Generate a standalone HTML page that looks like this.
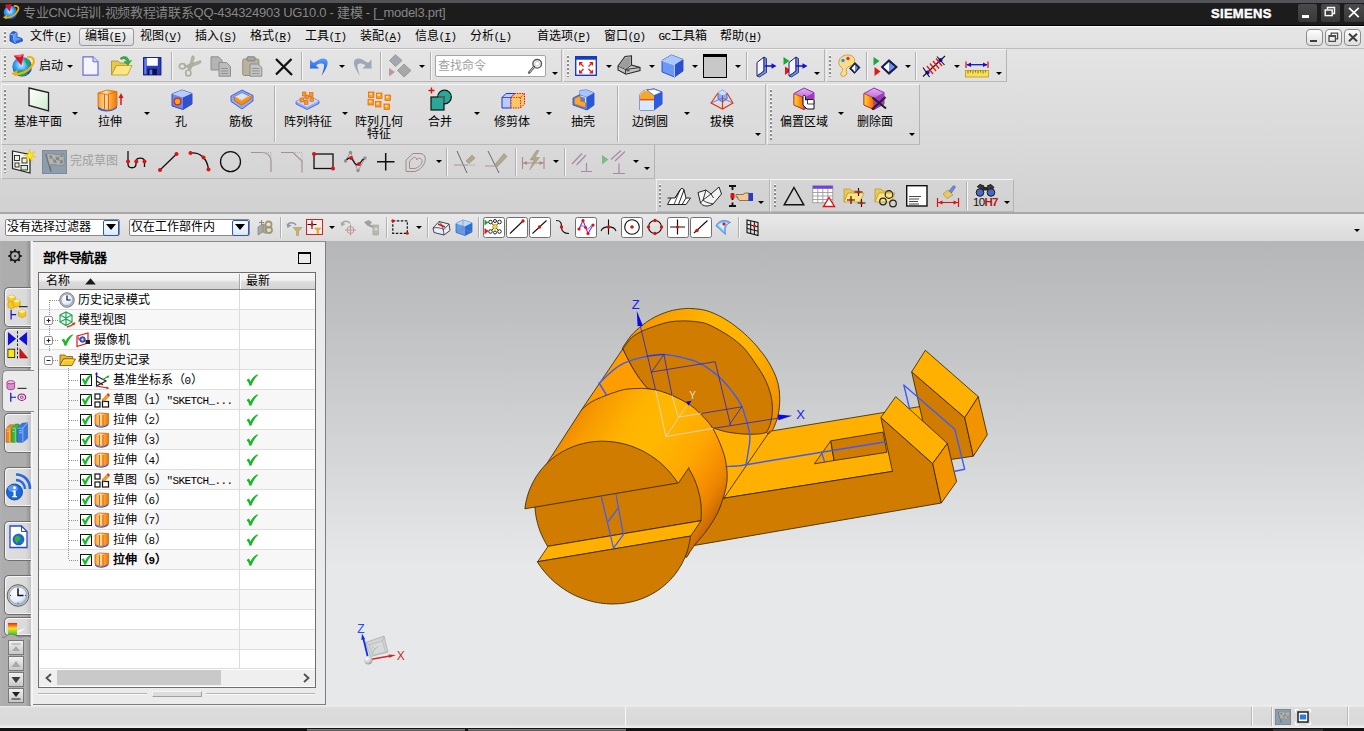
<!DOCTYPE html>
<html lang="zh-CN"><head><meta charset="utf-8"><title>NX</title>
<style>
*{margin:0;padding:0;box-sizing:border-box}
html,body{width:1364px;height:731px;overflow:hidden;background:#dedede}
body{position:relative;font-family:"Liberation Sans",sans-serif;font-size:12px;color:#000}
.a{position:absolute}
.t{position:absolute;white-space:nowrap;font-size:12px;line-height:12px;height:12px}
.t i{font-style:normal;font-family:"Liberation Mono",monospace;font-size:11px;letter-spacing:-0.6px}
svg{position:absolute;overflow:visible}
.tb{position:absolute;border-top:1px solid #f4f4f4;border-left:1px solid #efefef;border-right:1px solid #b4b4b4;border-bottom:1px solid #b8b8b8}
.sep{position:absolute;width:2px;border-left:1px solid #b0b0b0;border-right:1px solid #f6f6f6}
.grip{position:absolute;width:2px;background-image:repeating-linear-gradient(180deg,#fafafa 0,#fafafa 1px,#8c8c8c 1px,#8c8c8c 3px,transparent 3px,transparent 4px)}
.dd{position:absolute;width:0;height:0;border-left:3px solid transparent;border-right:3px solid transparent;border-top:3px solid #000}
</style></head>
<body>
<!-- frame backgrounds -->
<div class="a" style="left:0;top:0;width:1364px;height:3px;background:#535458"></div>
<div class="a" style="left:0;top:3px;width:1364px;height:23px;background:#1c1c1c;border-bottom:1px solid #000"></div>
<div class="a" style="left:0;top:26px;width:1364px;height:22px;background:linear-gradient(#e6e6e6,#e1e1e1);border-top:1px solid #fdfdfd"></div>
<div class="a" style="left:0;top:48px;width:1364px;height:1px;background:#bdbdbd"></div>
<div class="a" style="left:0;top:49px;width:1364px;height:164px;background:linear-gradient(#e4e4e4,#d1d1d1)"></div>
<div class="a" style="left:0;top:212px;width:1364px;height:2px;background:#a8a8a8"></div>
<div class="a" style="left:0;top:214px;width:1364px;height:27px;background:linear-gradient(#e9e9e9,#dadada)"></div>
<!-- viewport -->
<div class="a" style="left:326px;top:241px;width:1038px;height:465px;background:linear-gradient(#b5b6b7 0,#c3c4c5 22%,#d6d7d8 48%,#e7e8e9 70%,#e7e8e9 100%)"></div>
<svg class="a" style="left:0;top:0" width="1364" height="731" viewBox="0 0 1364 731"><defs>
<linearGradient id="gcyl" gradientUnits="userSpaceOnUse" x1="536" y1="470" x2="700" y2="578">
<stop offset="0" stop-color="#ee8800"/><stop offset="0.1" stop-color="#f89c00"/><stop offset="0.28" stop-color="#ffb500"/><stop offset="0.42" stop-color="#ffb800"/><stop offset="0.62" stop-color="#ffa800"/><stop offset="0.74" stop-color="#f89200"/><stop offset="0.82" stop-color="#ea8200"/><stop offset="0.88" stop-color="#cc6e00"/><stop offset="0.93" stop-color="#b46000"/></linearGradient>
<linearGradient id="grim" gradientUnits="userSpaceOnUse" x1="640" y1="320" x2="790" y2="420">
<stop offset="0" stop-color="#f59600"/><stop offset="0.3" stop-color="#ffb400"/><stop offset="0.6" stop-color="#ffb200"/><stop offset="0.8" stop-color="#f89e00"/><stop offset="1" stop-color="#e88400"/></linearGradient>
</defs>
<polygon points="772.0,430.9 921.0,406.4 925.0,420.0 892.5,471.4 723.9,498.2 690.0,500.0 690.0,405.0 765.0,415.0" fill="#ffb000" stroke="#2a2008" stroke-width="0.8" stroke-linejoin="round" />
<polygon points="723.9,498.2 892.5,471.4 880.9,417.5 932.7,463.6 941.3,503.0 690.0,546.2 690.0,520.0" fill="#cf7c00" stroke="#2a2008" stroke-width="0.8" stroke-linejoin="round" />
<polygon points="814.4,463.8 830.8,440.8 834.1,460.5" fill="#f5a000" stroke="#2a2008" stroke-width="0.8" stroke-linejoin="round" />
<polygon points="830.8,440.8 883.0,432.1 886.8,452.3 834.1,460.5" fill="#cf7c00" stroke="#2a2008" stroke-width="0.8" stroke-linejoin="round" />
<polygon points="911.7,371.9 964.7,417.5 973.3,456.2 941.3,460.9 933.9,450.8 924.5,428.6" fill="#cf7c00" stroke="#2a2008" stroke-width="0.8" stroke-linejoin="round" />
<polygon points="964.7,417.5 978.2,396.6 987.3,434.8 973.3,456.2" fill="#f29400" stroke="#2a2008" stroke-width="0.8" stroke-linejoin="round" />
<polygon points="911.7,371.9 925.3,350.3 978.2,396.6 964.7,417.5" fill="#ffb000" stroke="#2a2008" stroke-width="0.8" stroke-linejoin="round" />
<polygon points="880.9,417.5 895.7,396.6 947.4,443.4 932.7,463.6" fill="#ffb000" stroke="#2a2008" stroke-width="0.8" stroke-linejoin="round" />
<polygon points="932.7,463.6 947.4,443.4 956.6,481.6 941.3,503.0" fill="#f29400" stroke="#2a2008" stroke-width="0.8" stroke-linejoin="round" />
<polygon points="622.8,348.9 622.8,348.8 622.6,348.7 622.5,348.6 622.5,348.3 622.7,347.7 623.2,346.8 624.1,345.4 625.4,343.5 626.8,341.4 628.4,339.2 629.9,337.1 631.4,335.3 632.8,333.8 634.1,332.4 635.5,331.1 636.9,329.8 638.2,328.7 639.6,327.5 641.0,326.4 642.3,325.3 643.7,324.2 645.1,323.2 646.4,322.2 647.8,321.3 649.1,320.4 650.4,319.6 651.7,318.8 653.0,318.0 654.5,317.2 656.1,316.4 657.9,315.6 659.9,314.7 662.0,313.8 664.2,313.0 666.3,312.2 668.4,311.5 670.4,310.9 672.5,310.4 674.5,310.0 676.6,309.6 678.6,309.3 680.7,309.0 682.7,308.8 684.7,308.6 686.6,308.5 688.6,308.4 690.7,308.5 693.0,308.6 695.4,308.8 698.0,309.1 700.7,309.4 703.4,309.9 706.3,310.6 709.2,311.5 712.2,312.6 715.3,314.0 718.6,315.5 721.8,317.2 725.1,319.1 728.3,321.1 731.5,323.3 734.8,325.7 738.1,328.3 741.4,330.9 744.5,333.7 747.5,336.4 750.3,339.2 753.1,342.1 755.8,345.0 758.3,348.0 760.6,350.9 762.8,353.7 764.8,356.4 766.6,358.9 768.2,361.5 769.7,364.0 771.1,366.5 772.4,369.0 773.6,371.5 774.8,374.1 775.8,376.6 776.7,379.2 777.5,381.7 778.2,384.3 778.7,386.9 779.1,389.4 779.4,392.0 779.6,394.6 779.7,397.1 779.7,399.7 779.7,402.3 779.5,404.9 779.3,407.6 779.0,410.2 778.6,412.7 778.2,415.0 777.7,417.2 777.0,419.4 776.3,421.4 775.6,423.3 774.9,425.0 774.3,426.5 773.8,427.7 773.3,428.7 772.8,429.5 772.4,430.1 771.9,430.7 771.4,431.3 770.8,431.9 770.2,432.5 769.5,433.0 768.9,433.4 768.4,433.7 768.0,434.0 733.7,397.6 672.1,356.6" fill="url(#grim)" stroke="#2a2008" stroke-width="0.8" stroke-linejoin="round" />
<polygon points="622.8,348.9 623.7,347.6 625.0,345.9 626.4,343.8 628.1,341.6 629.7,339.5 631.4,337.8 633.0,336.4 634.8,335.2 636.5,334.1 638.3,333.1 640.2,332.1 642.1,331.2 644.0,330.3 646.0,329.4 648.0,328.6 650.1,327.8 652.2,327.1 654.4,326.3 656.6,325.5 658.9,324.8 661.3,324.0 663.7,323.3 666.1,322.7 668.4,322.2 670.7,321.8 673.0,321.5 675.3,321.2 677.6,321.1 679.9,321.0 682.3,320.9 684.7,320.9 687.3,321.0 689.8,321.1 692.3,321.3 694.8,321.5 697.1,321.8 699.2,322.1 701.1,322.4 702.9,322.7 704.7,323.2 706.8,323.9 709.2,324.9 712.0,326.2 715.2,327.8 718.5,329.6 721.9,331.6 725.2,333.5 728.3,335.5 731.1,337.4 733.9,339.4 736.5,341.4 739.0,343.5 741.4,345.6 743.7,347.9 745.9,350.3 747.9,352.8 749.8,355.4 751.7,358.0 753.4,360.6 755.2,363.2 756.9,365.8 758.7,368.3 760.3,370.9 761.9,373.5 763.4,376.0 764.7,378.6 765.9,381.2 767.1,383.8 768.1,386.4 769.0,388.9 769.8,391.5 770.5,393.9 771.1,396.3 771.5,398.6 771.9,400.8 772.1,403.0 772.3,405.2 772.4,407.3 772.4,409.3 772.3,411.3 772.2,413.3 772.0,415.2 771.7,417.0 771.4,418.8 771.1,420.6 770.7,422.3 770.2,424.0 769.7,425.6 769.2,427.1 768.6,428.4 768.0,429.5 767.6,430.5 767.0,431.3 766.3,432.1 765.3,432.7 763.8,433.2 761.8,433.6 759.3,433.9 756.5,434.1 753.6,434.2 750.5,434.3 747.5,434.2 744.4,434.1 741.1,433.8 737.7,433.5 734.4,433.1 731.2,432.7 728.3,432.2 725.6,431.7 723.0,431.0 720.6,430.3 718.4,429.6 716.5,429.0 714.9,428.4 713.8,428.1 713.2,427.9 712.8,427.8 712.5,427.6 712.0,427.2 711.1,426.3 709.8,425.0 708.3,423.3 706.6,421.3 704.8,419.2 702.8,417.0 700.8,415.1 698.7,413.1 696.3,411.2 693.9,409.2 691.4,407.3 688.9,405.5 686.5,403.8 684.1,402.2 681.7,400.7 679.3,399.2 676.9,397.9 674.5,396.7 672.1,395.6 669.6,394.6 667.2,393.9 664.7,393.2 662.2,392.6 659.9,392.0 657.7,391.5 655.7,390.9 653.7,390.4 651.9,390.0 650.2,389.5 648.6,388.9 647.3,388.3 646.2,387.5 645.4,386.7 644.7,385.7 644.1,384.8 643.5,383.9 642.9,383.0 642.3,382.2 641.6,381.4 641.0,380.6 640.5,379.9 639.9,379.1 639.3,378.3 638.7,377.5 638.1,376.7 637.6,375.8 637.0,375.0 636.4,374.1 635.8,373.2 635.2,372.2 634.5,371.2 633.9,370.2 633.2,369.1 632.6,368.0 632.0,367.0 631.4,366.0 630.9,364.9 630.3,363.9 629.8,362.9 629.2,361.8 628.7,360.8 628.2,359.7 627.6,358.7 627.1,357.6 626.5,356.6 626.0,355.5 625.5,354.5 625.0,353.5 624.5,352.4 624.0,351.3 623.5,350.3 623.1,349.5 622.8,348.9" fill="#cf7c00" stroke="#2a2008" stroke-width="0.8" stroke-linejoin="round" />
<polygon points="581.6,409.7 622.8,348.9 625.5,354.5 628.7,360.8 632.0,367.0 635.8,373.2 639.3,378.3 642.9,383.0 647.3,388.3 660.0,392.0 655.7,418.1 590.0,428.4" fill="#ff9d00" stroke="#2a2008" stroke-width="0.8" stroke-linejoin="round" />
<polygon points="543.6,468.6 581.6,409.7 582.7,408.7 584.2,407.4 586.0,405.8 588.1,404.1 590.7,402.4 593.6,400.7 597.2,399.0 601.6,397.2 606.3,395.3 611.0,393.5 615.6,392.0 619.5,390.7 622.8,389.9 625.7,389.3 628.3,389.0 630.8,388.8 633.3,388.6 635.9,388.5 638.6,388.5 641.4,388.4 644.1,388.5 646.9,388.7 649.6,389.0 652.3,389.4 655.0,389.9 657.7,390.4 660.4,391.1 663.1,392.0 665.9,392.9 668.8,394.0 671.9,395.3 675.2,396.8 678.6,398.5 682.0,400.2 685.1,401.9 687.9,403.6 690.3,405.1 692.3,406.6 694.2,408.0 695.9,409.5 697.7,411.2 699.7,413.1 701.8,415.3 704.1,417.5 706.3,420.0 708.6,422.6 710.8,425.4 712.8,428.4 714.7,431.8 716.5,435.5 718.3,439.3 719.9,443.2 721.4,446.9 722.6,450.3 723.6,453.2 724.4,455.9 725.1,458.3 725.6,460.7 726.0,463.1 726.3,465.6 726.7,468.1 726.9,470.7 727.1,473.2 727.2,475.8 727.1,478.3 727.0,480.9 726.7,483.4 726.3,485.9 725.8,488.4 725.2,490.9 724.5,493.5 723.7,496.2 722.9,499.0 721.9,501.8 720.9,504.8 719.8,507.8 718.5,510.7 717.2,513.7 715.6,516.6 713.8,519.7 712.0,522.7 710.0,525.6 708.1,528.5 706.2,531.1 704.4,533.6 702.5,535.8 700.6,538.0 698.8,540.1 697.0,542.1 695.3,544.3 693.6,546.6 691.9,549.1 690.2,551.6 688.7,554.0 687.5,556.0 686.6,557.4 607.0,522.0" fill="url(#gcyl)" stroke="#2a2008" stroke-width="0.8" stroke-linejoin="round" />
<polygon points="547.6,546.4 546.7,544.9 545.3,542.3 543.9,539.7 542.6,537.1 541.4,534.4 540.3,531.8 539.3,529.0 538.4,526.3 537.6,523.5 536.9,520.7 536.3,517.9 535.8,515.1 535.4,512.3 535.1,509.4 534.9,506.6 534.8,503.7 534.8,500.9 534.9,498.1 535.1,495.3 535.3,493.4 688.2,467.6 689.4,469.5 690.8,472.1 692.2,474.6 693.5,477.3 694.7,479.9 695.7,482.6 696.7,485.3 697.6,488.1 698.4,490.9 699.1,493.7 699.8,496.5 700.3,499.3 700.7,502.1 701.0,505.0 701.2,507.8 701.3,510.6 701.3,513.5 701.2,516.3 701.0,519.1 700.8,520.7" fill="#cf7c00" stroke="#2a2008" stroke-width="0.8" stroke-linejoin="round" />
<polygon points="537.7,561.7 690.7,536.1 701.1,520.7 548.1,546.3" fill="#ffb000" stroke="#2a2008" stroke-width="0.8" stroke-linejoin="round" />
<polygon points="678.6,482.9 689.0,467.5 684.0,455.0 653.0,457.0" fill="url(#gcyl)" stroke="none" stroke-width="0" stroke-linejoin="round" />
<polygon points="524.9,508.8 525.0,507.9 525.4,505.1 525.9,502.3 526.5,499.6 527.2,496.9 528.0,494.2 528.9,491.5 529.9,488.9 531.0,486.4 532.2,483.8 533.4,481.4 534.8,479.0 536.2,476.6 537.8,474.3 539.4,472.0 541.1,469.8 542.9,467.7 544.8,465.6 546.7,463.6 548.7,461.7 550.8,459.9 553.0,458.1 555.2,456.4 557.5,454.8 559.8,453.3 562.2,451.8 564.7,450.5 567.2,449.2 569.8,448.0 572.4,446.9 575.0,445.9 577.7,445.0 580.5,444.2 583.2,443.5 586.0,442.9 588.8,442.3 591.7,441.9 594.5,441.6 597.4,441.4 600.3,441.2 603.2,441.2 606.1,441.3 609.0,441.5 611.9,441.7 614.8,442.1 617.7,442.6 620.6,443.1 623.5,443.8 626.3,444.5 629.1,445.4 631.9,446.3 634.7,447.4 637.4,448.5 640.1,449.7 642.8,451.0 645.4,452.4 647.9,453.9 650.5,455.5 652.9,457.1 655.3,458.8 657.7,460.6 660.0,462.5 662.2,464.5 664.4,466.5 666.5,468.6 668.5,470.8 670.4,473.0 672.3,475.3 674.1,477.6 675.8,480.0 677.4,482.4 677.8,483.0" fill="#cf7c00" stroke="#2a2008" stroke-width="0.8" stroke-linejoin="round" />
<polygon points="677.5,570.9 675.9,573.2 674.2,575.4 672.4,577.5 670.5,579.6 668.6,581.5 666.6,583.5 664.5,585.3 662.3,587.1 660.1,588.8 657.8,590.4 655.5,591.9 653.0,593.4 650.6,594.7 648.1,596.0 645.5,597.2 642.9,598.3 640.2,599.3 637.5,600.2 634.8,601.0 632.1,601.7 629.3,602.3 626.4,602.8 623.6,603.3 620.7,603.6 617.9,603.8 615.0,603.9 612.1,604.0 609.2,603.9 606.3,603.7 603.4,603.5 600.5,603.1 597.6,602.6 594.7,602.1 591.8,601.4 589.0,600.6 586.2,599.8 583.4,598.8 580.6,597.8 577.9,596.7 575.2,595.5 572.5,594.2 569.9,592.8 567.3,591.3 564.8,589.7 562.4,588.1 559.9,586.3 557.6,584.5 555.3,582.7 553.1,580.7 550.9,578.7 548.8,576.6 546.8,574.4 544.9,572.2 543.0,569.9 541.2,567.6 539.5,565.2 537.9,562.7 537.2,561.8 690.4,536.1 690.3,537.3 689.9,540.1 689.4,542.9 688.8,545.6 688.1,548.3 687.3,551.0 686.4,553.6 685.4,556.2 684.3,558.8 683.1,561.3 681.9,563.8 680.5,566.2 679.0,568.6" fill="#cf7c00" stroke="#2a2008" stroke-width="0.8" stroke-linejoin="round" />
<polyline points="678.6,482.9 689.0,467.5" fill="none" stroke="#2a2008" stroke-width="0.8" stroke-linejoin="round" stroke-linecap="round" />
<polyline points="769.9,431.2 723.9,498.2" fill="none" stroke="#2a2008" stroke-width="0.8" stroke-linejoin="round" stroke-linecap="round" />
<polyline points="599.2,383.2 601.5,381.1 604.6,378.1 608.3,374.5 612.4,370.9 616.6,367.5 620.8,364.8 625.1,362.7 629.7,360.9 634.4,359.4 639.1,358.1 643.6,357.1 647.5,356.2 650.8,355.4 653.6,354.9 656.2,354.6 658.6,354.5 661.1,354.4 663.9,354.5 666.8,354.7 669.9,355.1 673.0,355.6 676.1,356.2 679.2,356.8 682.4,357.6 685.4,358.4 688.5,359.2 691.6,360.0 694.7,361.1 697.7,362.3 700.8,363.8 703.9,365.5 707.1,367.6 710.3,369.8 713.4,372.1 716.5,374.6 719.3,377.1 722.0,379.7 724.6,382.4 727.1,385.3 729.5,388.1 731.7,390.9 733.7,393.5 735.4,395.8 736.9,398.0 738.3,400.0 739.5,402.1 740.7,404.3 741.9,406.8 743.1,409.8 744.2,413.1 745.3,416.6 746.4,420.1 747.3,423.4 748.0,426.3 748.6,428.8 749.1,430.9 749.5,432.7 749.8,434.7 749.9,437.0 749.8,439.8 749.5,443.6 748.8,448.2 748.0,453.1 747.2,457.8 746.5,461.9 746.0,464.7" fill="none" stroke="#3a5cff" stroke-width="1.4" stroke-linejoin="round" stroke-linecap="round" />
<polyline points="599.2,383.2 606.4,394.9" fill="none" stroke="#3a5cff" stroke-width="1.6" stroke-linejoin="round" stroke-linecap="round" />
<polyline points="725.9,466.6 727.3,466.5 729.3,466.4 731.6,466.3 734.1,466.2 736.4,466.0 738.3,465.9 740.0,465.7 741.5,465.5 742.9,465.2 744.2,465.0 745.2,464.8 746.0,464.7 885.8,441.7" fill="none" stroke="#3a5cff" stroke-width="1.4" stroke-linejoin="round" stroke-linecap="round" />
<polyline points="821.6,452.3 824.5,461.8" fill="none" stroke="#3a5cff" stroke-width="1.2" stroke-linejoin="round" stroke-linecap="round" />
<polyline points="909.3,407.7 903.8,385.0 954.8,429.3 964.7,469.2 954.8,471.2" fill="none" stroke="#3a5cff" stroke-width="1.4" stroke-linejoin="round" stroke-linecap="round" />
<polyline points="601.2,496.0 613.5,548.2 623.4,534.7 616.0,494.5" fill="none" stroke="#3a5cff" stroke-width="1.2" stroke-linejoin="round" stroke-linecap="round" />
<polyline points="608.1,521.6 618.0,508.3" fill="none" stroke="#3a5cff" stroke-width="1.2" stroke-linejoin="round" stroke-linecap="round" />
<polyline points="640.3,325.8 655.7,390.4" fill="none" stroke="#2222e0" stroke-width="0.8" stroke-linejoin="round" stroke-linecap="round" />
<polyline points="713.1,428.4 778.8,418.1" fill="none" stroke="#2222e0" stroke-width="0.8" stroke-linejoin="round" stroke-linecap="round" />
<polyline points="651.6,372.0 715.2,361.7 730.6,425.3" fill="none" stroke="#2222e0" stroke-width="0.8" stroke-linejoin="round" stroke-linecap="round" />
<polyline points="663.9,354.5 672.1,395.6" fill="none" stroke="#2222e0" stroke-width="0.8" stroke-linejoin="round" stroke-linecap="round" />
<polyline points="651.6,372.0 663.9,354.5" fill="none" stroke="#2222e0" stroke-width="0.8" stroke-linejoin="round" stroke-linecap="round" />
<polyline points="700.8,413.6 741.9,406.8 729.6,424.3" fill="none" stroke="#2222e0" stroke-width="0.8" stroke-linejoin="round" stroke-linecap="round" />
<polyline points="647.5,356.2 663.9,354.5" fill="none" stroke="#2222e0" stroke-width="0.8" stroke-linejoin="round" stroke-linecap="round" />
<polyline points="655.7,390.4 665.9,436.6 713.1,428.4" fill="none" stroke="#d8d4cc" stroke-width="0.9" stroke-linejoin="round" stroke-linecap="round" />
<polyline points="665.9,436.6 686.5,405.8" fill="none" stroke="#d8d4cc" stroke-width="0.9" stroke-linejoin="round" stroke-linecap="round" />
<polyline points="672.1,395.6 678.2,417.1 700.8,413.6" fill="none" stroke="#d8d4cc" stroke-width="0.9" stroke-linejoin="round" stroke-linecap="round" />
<polygon points="636.8,311.0 642.9,325.8 637.6,326.2" fill="#0a0ae8" stroke="none" stroke-width="0" stroke-linejoin="round" />
<polygon points="792.1,415.7 777.8,414.6 778.4,420.2" fill="#0a0ae8" stroke="none" stroke-width="0" stroke-linejoin="round" />
<polygon points="691.6,400.7 686.0,401.7 688.5,405.8" fill="#0a0ae8" stroke="none" stroke-width="0" stroke-linejoin="round" />
<text x="631.7" y="309.0" fill="#1a1aff" font-family="Liberation Sans, sans-serif" font-size="13">Z</text>
<text x="796.2" y="418.5" fill="#1a1aff" font-family="Liberation Sans, sans-serif" font-size="13">X</text>
<text x="689.3" y="399.3" fill="#e0dcd0" font-family="Liberation Sans, sans-serif" font-size="10">Y</text></svg>
<!-- status bar -->
<div class="a" style="left:0;top:705px;width:1364px;height:23px;background:linear-gradient(#f2f2f2 0,#dcdcdc 3px,#d9d9d9 19px,#ececec 22px,#f2f2f2 23px)"></div>
<div class="a" style="left:0;top:728px;width:1364px;height:3px;background:#121212"></div>

<!-- title bar -->
<svg style="left:2px;top:3px" width="18" height="18" viewBox="10 53 26 26">
<defs><radialGradient id="nxg" cx="0.450" cy="0.400" r="0.650"><stop offset="0" stop-color="#c8f4ff"/><stop offset="0.450" stop-color="#38a8f8"/><stop offset="1" stop-color="#0838b0"/></radialGradient></defs>
<circle cx="22.200" cy="66.800" r="9.800" fill="url(#nxg)"/>
<path d="M27 57.500 C33 56 35.500 60 32.500 65 C29 71 21 74.500 14.500 74.500" fill="none" stroke="#f0b000" stroke-width="2.400"/>
<path d="M11.200 73.500 L17.500 70 L16.500 76.500Z" fill="#f0b000"/>
<path d="M13.700 55.700 L23.800 54.300 L21.400 65.500Z" fill="#e01020"/>
</svg>
<div class="t" style="left:23px;top:5px;font-size:13px;line-height:16px;height:16px;color:#868686;letter-spacing:-0.28px">专业CNC培训.视频教程请联系QQ-434324903 UG10.0 - 建模 - [_model3.prt]</div>
<div class="t" style="left:1211px;top:6px;font-size:13px;line-height:16px;height:16px;color:#fff;font-weight:bold;letter-spacing:0.3px;-webkit-text-stroke:0.45px #fff">SIEMENS</div>
<div class="a" style="left:1298px;top:4px;width:19px;height:18px;background:linear-gradient(#4a4a4a,#383838);border-radius:2px"></div>
<div class="a" style="left:1321px;top:4px;width:19px;height:18px;background:linear-gradient(#4a4a4a,#383838);border-radius:2px"></div>
<div class="a" style="left:1344px;top:4px;width:20px;height:18px;background:linear-gradient(#4a4a4a,#383838);border-radius:2px"></div>
<div class="a" style="left:1302px;top:15px;width:7px;height:3px;background:#fff"></div>
<svg style="left:1324px;top:6px" width="12" height="12" viewBox="0 0 12 12"><path d="M3.5 3.5 V1.5 H10.5 V7.5 H8.5" fill="none" stroke="#fff" stroke-width="1.4"/><rect x="1.2" y="4" width="7" height="5.6" fill="none" stroke="#fff" stroke-width="1.4"/></svg>
<svg style="left:1348px;top:7px" width="12" height="11" viewBox="0 0 12 11"><path d="M1 0.8 L10.8 10.2 M10.8 0.8 L1 10.2" stroke="#fff" stroke-width="1.7" fill="none"/></svg>
<!-- menu bar -->
<div class="grip" style="left:4px;top:31px;height:13px"></div>
<svg style="left:9px;top:29px" width="15" height="15" viewBox="0 0 15 15">
<path d="M1 5 L4 2.5 L8 3.5 L8 8 L13 9.5 L13.5 12 L6 14.5 L1 12 Z" fill="#2a66e0" stroke="#1a3cb0" stroke-width="0.8"/>
<path d="M1 5 L4.5 6 L8 3.5 M4.5 6 L4.5 10.5 L6.5 14" fill="none" stroke="#9cc4ff" stroke-width="1"/>
<path d="M4.5 6.2 L7.6 4.2 L7.6 8.2 L12.8 9.8 L6.3 12.3 L4.7 10.3 Z" fill="#5a9cf8"/>
</svg>
<div class="a" style="left:79px;top:28px;width:55px;height:18px;border:1px solid #9a9a9a;border-radius:3px;background:linear-gradient(#f2f2f2,#dcdcdc)"></div>
<div class="t" style="left:29.5px;top:30px">文件<i>(<u>F</u>)</i></div>
<div class="t" style="left:84.5px;top:30px">编辑<i>(<u>E</u>)</i></div>
<div class="t" style="left:139.5px;top:30px">视图<i>(<u>V</u>)</i></div>
<div class="t" style="left:194.5px;top:30px">插入<i>(<u>S</u>)</i></div>
<div class="t" style="left:249.5px;top:30px">格式<i>(<u>R</u>)</i></div>
<div class="t" style="left:304.5px;top:30px">工具<i>(<u>T</u>)</i></div>
<div class="t" style="left:359.5px;top:30px">装配<i>(<u>A</u>)</i></div>
<div class="t" style="left:414.5px;top:30px">信息<i>(<u>I</u>)</i></div>
<div class="t" style="left:469.5px;top:30px">分析<i>(<u>L</u>)</i></div>
<div class="t" style="left:536.5px;top:30px">首选项<i>(<u>P</u>)</i></div>
<div class="t" style="left:603.5px;top:30px">窗口<i>(<u>O</u>)</i></div>
<div class="t" style="left:658.5px;top:30px"><i>GC</i>工具箱</div>
<div class="t" style="left:719.5px;top:30px">帮助<i>(<u>H</u>)</i></div>
<div class="a" style="left:1306px;top:29px;width:17px;height:17px;border:1px solid #8c8c8c;border-radius:4px;background:linear-gradient(#fdfdfd,#dedede)"></div>
<div class="a" style="left:1325px;top:29px;width:17px;height:17px;border:1px solid #8c8c8c;border-radius:4px;background:linear-gradient(#fdfdfd,#dedede)"></div>
<div class="a" style="left:1344px;top:29px;width:17px;height:17px;border:1px solid #8c8c8c;border-radius:4px;background:linear-gradient(#fdfdfd,#dedede)"></div>
<div class="a" style="left:1310px;top:40px;width:7px;height:2px;background:#3c3c3c"></div>
<svg style="left:1328px;top:32px" width="11" height="11" viewBox="0 0 11 11"><path d="M3.2 3.2 V1.2 H9.6 V6.8 H7.6" fill="none" stroke="#4a4a4a" stroke-width="1.3"/><path d="M1 3.6 H7.4 V9.4 H1 Z" fill="none" stroke="#4a4a4a" stroke-width="1.3"/><path d="M1 4.4 H7.4" stroke="#4a4a4a" stroke-width="1.2"/></svg>
<svg style="left:1348px;top:33px" width="10" height="9" viewBox="0 0 10 9"><path d="M1 0.8 L9 8.2 M9 0.8 L1 8.2" stroke="#3c3c3c" stroke-width="2" fill="none"/></svg>

<!-- toolbar row 1 -->
<div class="tb" style="left:1px;top:49px;width:561px;height:33px"></div>
<div class="tb" style="left:563px;top:49px;width:262px;height:33px"></div>
<div class="tb" style="left:826px;top:49px;width:181px;height:33px"></div>
<div class="grip" style="left:4px;top:55px;height:22px"></div>
<div class="grip" style="left:567px;top:55px;height:22px"></div>
<div class="grip" style="left:829px;top:55px;height:22px"></div>
<!-- NX start logo -->
<svg style="left:10px;top:53px" width="26" height="26" viewBox="10 53 26 26">
<defs><radialGradient id="nxg2" cx="0.450" cy="0.400" r="0.650"><stop offset="0" stop-color="#c8f4ff"/><stop offset="0.450" stop-color="#38a8f8"/><stop offset="1" stop-color="#0838b0"/></radialGradient></defs>
<circle cx="22.200" cy="66.800" r="9.800" fill="url(#nxg2)"/>
<path d="M24 58.500 C28 58 31 62 29 67 C27 66 25 62 24 58.500Z M19 70 C22 69 26 71 27.500 74 C25 76.500 21 76.500 18.500 75 C18 73 18 71 19 70Z" fill="#28a838" opacity="0.900"/>
<path d="M27 57.500 C33 56 35.500 60 32.500 65 C29 71 21 74.500 14.500 74.500" fill="none" stroke="#f0b000" stroke-width="2.200"/>
<path d="M27.500 58.200 C32 57.500 33.500 60 31.500 64" fill="none" stroke="#ffe878" stroke-width="0.800"/>
<path d="M11.200 73.500 L17.500 70 L16.500 76.500Z" fill="#f0b000"/>
<path d="M13.700 55.700 L23.800 54.300 L21.400 65.500Z" fill="#e01020"/>
<path d="M13.700 55.700 L23.800 54.300 L20 57.500Z" fill="#ff6068"/>
</svg>
<div class="t" style="left:39px;top:60px">启动</div>
<div class="dd" style="left:67px;top:65px"></div>
<!-- new -->
<svg style="left:82px;top:56px" width="17" height="20" viewBox="0 0 17 20"><path d="M1 0.8 H11 L16 5.8 V19.2 H1 Z" fill="#f4f4ff" stroke="#6a6ad8" stroke-width="1.2"/><path d="M11 0.8 V5.8 H16" fill="#d8d8ff" stroke="#6a6ad8" stroke-width="1"/></svg>
<!-- open -->
<svg style="left:110px;top:54px" width="24" height="22" viewBox="0 0 24 22">
<path d="M1.5 21 V7 H8 L10 9 H18 V12 H6 Z" fill="#e8c84a" stroke="#a88a20" stroke-width="0.8"/>
<path d="M1.5 21 L6.5 11.5 H22 L17.5 21 Z" fill="#fbe680" stroke="#b89a28" stroke-width="0.8"/>
<path d="M10 4.5 C14 1 18.5 2.5 19 7 L21.5 6.5 L18 11 L14 7.8 L16.5 7.4 C16 4.5 13 4 11.5 5.5 Z" fill="#38b048" stroke="#208030" stroke-width="0.5"/>
</svg>
<!-- save -->
<svg style="left:143px;top:56.500px" width="18.500" height="18.500" viewBox="0 0 20 19" preserveAspectRatio="none"><rect x="0.6" y="0.6" width="18.8" height="17.8" fill="#2a3ec0" stroke="#101870" stroke-width="1"/><rect x="4" y="1" width="12" height="8" fill="#fff"/><rect x="5" y="12" width="10" height="6.4" fill="#101040"/><rect x="7" y="13" width="3" height="5" fill="#5a78ff"/><rect x="1.5" y="1.5" width="2" height="16" fill="#6a82f0"/></svg>
<div class="sep" style="left:171px;top:52px;height:28px"></div>
<!-- cut -->
<svg style="left:178px;top:55px" width="24" height="22" viewBox="0 0 24 22"><path d="M8 10.500 L22.500 5.500 C23.500 6.500 23 8 22 8.500 L10 13Z M10.500 14 L14 1 C15.500 0.500 16.500 1.500 16.500 2.500 L13 14.500Z" fill="#b4b4a6" stroke="#9c9c8e" stroke-width="0.500"/><g fill="none" stroke="#aeae9e" stroke-width="1.700"><ellipse cx="4.300" cy="11.300" rx="3" ry="2.600"/><ellipse cx="10.300" cy="18" rx="2.600" ry="3"/></g><path d="M7 11.500 L11 12 M10.500 15 L11.500 12" stroke="#aeae9e" stroke-width="1.600"/></svg>
<!-- copy -->
<svg style="left:210px;top:56px" width="22" height="21" viewBox="0 0 22 21"><path d="M1 0.8 H8.5 L12 4.3 V14 H1Z" fill="#b4b4b4" stroke="#8e8e8e"/><path d="M9 6.5 H16.5 L20.5 10.5 V20.2 H9Z" fill="#bcbcbc" stroke="#8e8e8e"/><path d="M11 12.5 H18 M11 15 H18 M11 17.500 H18" stroke="#909090" stroke-width="0.9"/></svg>
<!-- paste -->
<svg style="left:242px;top:56px" width="21" height="21" viewBox="0 0 21 21"><rect x="0.8" y="3" width="16" height="16.5" rx="1.5" fill="#b8b49c" stroke="#908c78"/><rect x="5" y="0.8" width="8" height="4" rx="1" fill="#a8a8a8" stroke="#808080"/><path d="M8 8 H16 L19.800 11.5 V20.200 H8Z" fill="#c4c4c4" stroke="#8e8e8e"/><path d="M10 12.500 H17.500 M10 15 H17.500 M10 17.500 H17.500" stroke="#909090" stroke-width="0.9"/></svg>
<!-- delete X -->
<svg style="left:275px;top:58px" width="18" height="18" viewBox="0 0 18 18"><path d="M1 1 L17 17 M16.5 1 L1 16.500" stroke="#111" stroke-width="2.3" fill="none"/></svg>
<div class="sep" style="left:301px;top:52px;height:28px"></div>
<!-- undo -->
<svg style="left:310px;top:57px" width="19" height="19" viewBox="0 0 19 19"><defs><linearGradient id="gun" x1="0" y1="0" x2="0" y2="1"><stop offset="0" stop-color="#58a0ff"/><stop offset="1" stop-color="#1040d0"/></linearGradient></defs><path d="M0,2.500 L0,11.600 L9.100,11.600 L6,8.500 C9,6 12.500,6.200 14,7.500 C14.300,11 13,15 11.400,18.700 C15,14 17.800,9 17.600,5 C17.200,1.200 12.500,0.800 9.500,2.400 C7.500,3.400 5,5 3.200,5.700 Z" fill="url(#gun)"/></svg>
<div class="dd" style="left:339px;top:65px"></div>
<!-- redo -->
<svg style="left:353px;top:57px" width="19" height="19" viewBox="0 0 19 19"><g transform="translate(18.500,0) scale(-1,1)"><path d="M0,2.500 L0,11.600 L9.100,11.600 L6,8.500 C9,6 12.500,6.200 14,7.500 C14.300,11 13,15 11.400,18.700 C15,14 17.800,9 17.600,5 C17.200,1.200 12.500,0.800 9.500,2.400 C7.500,3.400 5,5 3.200,5.700 Z" fill="#9ca8b8"/></g></svg>
<div class="sep" style="left:380px;top:52px;height:28px"></div>
<!-- repeat cmd -->
<svg style="left:387px;top:54px" width="25" height="24" viewBox="0 0 25 24"><path d="M8.500 0.800 L15 6.500 L8.500 12.500 L2.500 6.500 Z" fill="#a8a8a8" stroke="#989898"/><path d="M5 6.500 L8.500 3 V10 Z" fill="#9aa8c8"/><path d="M17 10 L24 16.500 L17 23 L10.500 16.500 Z" fill="#a8a8a8" stroke="#989898"/><path d="M2 14 L8 18 L2 22.500 Z" fill="#c09898"/></svg>
<div class="dd" style="left:419px;top:65px"></div>
<div class="sep" style="left:430px;top:52px;height:28px"></div>
<!-- search -->
<div class="a" style="left:435px;top:55px;width:111px;height:22px;background:#fff;border:1px solid #a4a4a4;border-radius:2px"></div>
<div class="t" style="left:438px;top:60px;color:#a0a0a0">查找命令</div>
<svg style="left:528px;top:58px" width="15" height="16" viewBox="0 0 15 16"><circle cx="9.200" cy="5.800" r="4.300" fill="#fff" stroke="#555" stroke-width="1.400"/><circle cx="9.200" cy="5.800" r="2.400" fill="none" stroke="#bbb" stroke-width="0.800"/><path d="M6 9 L1.200 14.500" stroke="#555" stroke-width="2.600" stroke-linecap="round"/><path d="M6 9 L1.500 14.200" stroke="#e0e0e0" stroke-width="0.900"/></svg>
<div class="dd" style="left:552px;top:72px"></div>
<!-- fit -->
<svg style="left:575px;top:56px" width="22" height="20" viewBox="0 0 22 20"><rect x="0.700" y="0.700" width="20.600" height="18.600" fill="#fff" stroke="#1838c8" stroke-width="1.400"/><rect x="0.700" y="0.700" width="20.600" height="3" fill="#1838c8"/><g fill="#e81818"><path d="M4 6 H8 L4 10Z M18 6 H14 L18 10Z M4 17.500 H8 L4 13.500Z M18 17.500 H14 L18 13.500Z"/></g><path d="M5 7 L8.500 10.500 M17 7 L13.500 10.500 M5 16.500 L8.500 13 M17 16.500 L13.500 13" stroke="#e81818" stroke-width="1.200"/></svg>
<div class="dd" style="left:606px;top:65px"></div>
<!-- L bracket -->
<svg style="left:617px;top:55px" width="24" height="20" viewBox="0 0 24 20"><path d="M1 11 L8 1.500 L14.500 0.800 L14.500 10 L23 12.500 L23 15.500 L9 19.200 L1 15 Z" fill="#c4c4c4" stroke="#2a2a2a" stroke-width="1.100"/><path d="M1 11 L8.500 14.500 L8.500 18.800 M8.500 14.500 L14.500 10 M8.500 14.500 L23 12.500" fill="none" stroke="#2a2a2a" stroke-width="0.900"/><path d="M2 11.200 L8 3 L13.500 2 V9.500 L8.500 13.800Z" fill="#9c9c9c"/><ellipse cx="11" cy="15.500" rx="1.800" ry="1.100" fill="#555"/></svg>
<div class="dd" style="left:649px;top:65px"></div>
<!-- blue cube -->
<svg style="left:661px;top:54px" width="23" height="24" viewBox="0 0 23 24"><path d="M1 6.500 L10.500 1 L22 5.500 L22 17 L13.500 23 L1 18 Z" fill="#6c98f8" stroke="#2848c0" stroke-width="0.900"/><path d="M1 6.500 L13.500 11 L22 5.500 L10.500 1 Z" fill="#a8c8ff"/><path d="M13.500 11 L22 5.500 V17 L13.500 23 Z" fill="#2850d0"/><path d="M1 6.500 L13.500 11 V23" fill="none" stroke="#c8dcff" stroke-width="0.800"/></svg>
<div class="dd" style="left:692px;top:65px"></div>
<!-- gray window -->
<div class="a" style="left:703px;top:54px;width:24px;height:24px;background:#c8c8c8;border:1px solid #000;border-top:3px solid #000"></div>
<div class="dd" style="left:735px;top:65px"></div>
<div class="sep" style="left:746px;top:52px;height:28px"></div>
<!-- plane arrow icons -->
<svg style="left:756px;top:56px" width="21" height="21" viewBox="0 0 21 21"><path d="M1 6.500 L8 1 V15 L1 20 Z" fill="#f4f4ff" stroke="#202060" stroke-width="1"/><path d="M8 1 L10.500 2.500 V16.500 L3.500 21 L1 20 L8 15Z" fill="#6c8cf0" stroke="#202060" stroke-width="0.800"/><path d="M9 10 H17" stroke="#1010d8" stroke-width="1.500"/><path d="M20.500 10 L15.500 7.300 V12.700Z" fill="#1010d8"/></svg>
<svg style="left:783px;top:55px" width="25" height="22" viewBox="0 0 25 22"><path d="M0.500 2 L6.500 6 L0.500 10Z" fill="#18a838"/><path d="M2 11.500 L8 15.500 L2 20Z" fill="#e01818"/><path d="M6 7.500 L13 2 V16 L6 21 Z" fill="#f4f4ff" stroke="#202060" stroke-width="1"/><path d="M13 2 L15.500 3.500 V17.500 L8.500 22 L6 21 L13 16Z" fill="#6c8cf0" stroke="#202060" stroke-width="0.800"/><path d="M13 11 H21" stroke="#1010d8" stroke-width="1.500"/><path d="M24.500 11 L19.500 8.300 V13.700Z" fill="#1010d8"/></svg>
<div class="dd" style="left:814px;top:72px"></div>
<!-- palette -->
<svg style="left:836px;top:54px" width="24" height="24" viewBox="0 0 24 24"><path d="M10.500 1 C17 0.500 20 4.500 18 9 C16.500 12.500 12 11.500 10.500 14.500 C9.500 17 12 18.500 10 21 C7.500 23.500 3.500 22.500 5 19 C6.500 16 8 15.500 5 13 C0.500 9.500 3 1.800 10.500 1Z" fill="#f8dc90" stroke="#c89838" stroke-width="0.900"/><circle cx="7" cy="6.500" r="1.700" fill="#2890e8"/><circle cx="12" cy="4.500" r="1.700" fill="#e82828"/><circle cx="15.500" cy="7.500" r="1.500" fill="#f8f030"/><path d="M13.500 14.500 L19 8.500 L24 13.500 L18.500 19.500 Z" fill="#181858" stroke="#000" stroke-width="0.600"/><path d="M15.500 14.300 L19 10.500 V18Z" fill="#fff"/><path d="M22 13.700 L19 10.500 V18Z" fill="#6890f0"/></svg>
<div class="sep" style="left:866px;top:52px;height:28px"></div>
<svg style="left:873px;top:56px" width="25" height="21" viewBox="0 0 25 21"><path d="M0.500 1 L6.500 5 L0.500 9.500Z" fill="#18a838"/><path d="M1.500 11 L7.500 15.500 L1.500 20Z" fill="#e01818"/><path d="M8 11 L16 3.500 L24.500 11 L16 18.500 Z" fill="#181858" stroke="#000" stroke-width="0.600"/><path d="M10.500 11 L16 6 V16Z" fill="#fff"/><path d="M22 11 L16 6 V16Z" fill="#6890f0"/></svg>
<div class="dd" style="left:905px;top:65px"></div>
<div class="sep" style="left:915px;top:52px;height:28px"></div>
<!-- hatch line icon -->
<svg style="left:922px;top:55px" width="24" height="23" viewBox="0 0 24 23"><path d="M1 21.500 L23 1" stroke="#111" stroke-width="1.100"/><path d="M5 11 L11 19 M8 8.500 L14 16 M11 6 L17 13.500 M14 3.500 L20 11 " stroke="#e01818" stroke-width="1.300"/><circle cx="5.500" cy="17.500" r="2.100" fill="#1010e0"/><circle cx="18.500" cy="5" r="2.100" fill="#1010e0"/><path d="M1 12.500 L7.500 22 M15 1.500 L22.500 10" stroke="#111" stroke-width="1.100"/></svg>
<div class="dd" style="left:953.5px;top:65px"></div>
<!-- measure -->
<svg style="left:965px;top:61px" width="24" height="17" viewBox="0 0 24 17"><path d="M1 0.500 V7 M23 0.500 V7" stroke="#e01818" stroke-width="1.300"/><path d="M2 3.700 H22" stroke="#1010d8" stroke-width="1.300"/><path d="M1.500 3.700 L6 1.500 V6Z M22.500 3.700 L18 1.500 V6Z" fill="#1010d8"/><rect x="0.500" y="9.500" width="23" height="6.500" fill="#f8e050" stroke="#b89820" stroke-width="0.800"/><path d="M3 9.500 V12.500 M5.500 9.500 V11.500 M8 9.500 V12.500 M10.500 9.500 V11.500 M13 9.500 V12.500 M15.500 9.500 V11.500 M18 9.500 V12.500 M20.500 9.500 V11.500" stroke="#604800" stroke-width="0.700"/></svg>
<div class="dd" style="left:996px;top:72px"></div>

<!-- toolbar row 2 -->
<div class="tb" style="left:1px;top:84px;width:765px;height:61px"></div>
<div class="tb" style="left:767px;top:84px;width:153px;height:61px"></div>
<div class="grip" style="left:4px;top:89px;height:51px"></div>
<div class="grip" style="left:770px;top:89px;height:51px"></div>
<div class="sep" style="left:274px;top:86px;height:56px"></div>
<div class="sep" style="left:617px;top:86px;height:56px"></div>
<!-- datum plane -->
<svg style="left:28px;top:87px" width="22" height="25" viewBox="0 0 22 25"><defs><linearGradient id="gdp" x1="0" y1="0" x2="1" y2="1"><stop offset="0" stop-color="#ffffff"/><stop offset="0.600" stop-color="#e4f4e4"/><stop offset="1" stop-color="#c8e8c8"/></linearGradient></defs><path d="M1 1 L20.500 5.500 V24 L1 18.500 Z" fill="url(#gdp)" stroke="#222" stroke-width="1.300"/></svg>
<div class="t" style="left:13.500px;top:115.500px">基准平面</div>
<div class="dd" style="left:72px;top:112px"></div>
<!-- extrude -->
<svg style="left:97px;top:89px" width="27" height="23" viewBox="0 0 27 23"><defs><linearGradient id="gex" x1="0" y1="0" x2="1" y2="0"><stop offset="0" stop-color="#f89820"/><stop offset="0.400" stop-color="#ffe8b0"/><stop offset="0.700" stop-color="#f8a030"/><stop offset="1" stop-color="#e87808"/></linearGradient></defs><path d="M1 4 L10 1 L20 2.500 V17 C16 22 6 22 1 18 Z" fill="url(#gex)" stroke="#e06808" stroke-width="0.800"/><path d="M1 17.500 C6 22.500 16 22.500 20 17 L20 19 C15 23.500 5 23.500 1 20Z" fill="#3858d0"/><path d="M7.500 5 V20.500 M11.500 5.500 V21 " stroke="#e86010" stroke-width="1.100"/><path d="M1 4 L10.500 5.500 L20 2.500" fill="none" stroke="#e06808" stroke-width="0.800"/><path d="M24 8 V16" stroke="#e01010" stroke-width="1.500"/><path d="M24 4 L21.500 9 H26.500Z" fill="#e01010"/></svg>
<div class="t" style="left:98px;top:115.500px">拉伸</div>
<div class="dd" style="left:143.500px;top:112px"></div>
<!-- hole -->
<svg style="left:171px;top:89px" width="22" height="21" viewBox="0 0 22 21"><path d="M1 5 L11 1 L21 4.500 L21 15 L12 20.500 L1 17 Z" fill="#6888f0" stroke="#2840b8" stroke-width="0.900"/><path d="M1 5 L12 8.500 L21 4.500 L11 1Z" fill="#b8ccff"/><path d="M12 8.500 L21 4.500 V15 L12 20.500Z" fill="#3050d0"/><circle cx="6.500" cy="12.500" r="3.300" fill="#f8a818" stroke="#e02808" stroke-width="1.300"/></svg>
<div class="t" style="left:174.500px;top:115.500px">孔</div>
<!-- rib -->
<svg style="left:230px;top:89px" width="24" height="21" viewBox="0 0 24 21"><path d="M1 7 L12 1 L23 6.500 V12 L12 20 L1 12.500Z" fill="#88a8f8" stroke="#3858d0" stroke-width="0.900"/><path d="M3.500 8 L12 3.500 L20.500 7.500 L12 13.500Z" fill="#d8e4ff" stroke="#3858d0" stroke-width="0.600"/><path d="M4.500 7.500 L11.500 11.500 L21 6 V10 L11.500 16 L4.500 11.500Z" fill="#f89010" stroke="#e05808" stroke-width="0.800"/><path d="M4.500 7.500 L11.500 11.500 L21 6" fill="none" stroke="#ffd050" stroke-width="0.900"/></svg>
<div class="t" style="left:229px;top:115.500px">筋板</div>
<!-- pattern feature -->
<svg style="left:295px;top:91px" width="25" height="19" viewBox="0 0 25 19"><path d="M1 10.500 L13 5 L24 10 L24 12.500 L12 18.500 L1 13Z" fill="#88a8f8" stroke="#3858d0" stroke-width="0.800"/><path d="M1 10.500 L13 5 L24 10 L12 16Z" fill="#c8d8ff"/><g fill="#f89818" stroke="#e06008" stroke-width="0.600"><rect x="5" y="7" width="3.500" height="4"/><rect x="10" y="4" width="3.500" height="4"/><rect x="15" y="6.500" width="3.500" height="4"/><rect x="9.500" y="9.500" width="3.500" height="4"/><rect x="14.500" y="1.500" width="3.500" height="4"/><rect x="7.500" y="1" width="3.500" height="4"/></g></svg>
<div class="t" style="left:283.500px;top:115.500px">阵列特征</div>
<div class="dd" style="left:342px;top:112px"></div>
<!-- pattern geometry -->
<svg style="left:367px;top:90px" width="25" height="21" viewBox="0 0 25 21"><g fill="#f8a018" stroke="#e86008" stroke-width="0.700"><rect x="1.500" y="2" width="5.500" height="5.500"/><rect x="9.500" y="3" width="5.500" height="5.500"/><rect x="18" y="5" width="5.500" height="5.500"/><rect x="1" y="9.500" width="5.500" height="5.500"/><rect x="8.500" y="11.500" width="5.500" height="5.500"/><rect x="17" y="14" width="5.500" height="5.500"/></g><g fill="#ffe090"><rect x="2.500" y="3" width="2.500" height="2"/><rect x="10.500" y="4" width="2.500" height="2"/><rect x="19" y="6" width="2.500" height="2"/><rect x="2" y="10.500" width="2.500" height="2"/><rect x="9.500" y="12.500" width="2.500" height="2"/><rect x="18" y="15" width="2.500" height="2"/></g></svg>
<div class="t" style="left:354.500px;top:115.500px">阵列几何</div>
<div class="t" style="left:366.500px;top:128px">特征</div>
<!-- unite -->
<svg style="left:428px;top:87px" width="25" height="25" viewBox="0 0 25 25"><path d="M0.500 3.500 H6.500 M3.500 0.500 V6.500" stroke="#e01010" stroke-width="1.400"/><circle cx="16.500" cy="10" r="6.800" fill="#28a898" stroke="#111" stroke-width="1.200"/><rect x="3" y="10" width="13" height="13" fill="#28a898" stroke="#111" stroke-width="1.200"/><path d="M10 10 H16 V16" fill="none" stroke="#888" stroke-width="0.800"/></svg>
<div class="t" style="left:428px;top:115.500px">合并</div>
<div class="dd" style="left:474px;top:112px"></div>
<!-- trim body -->
<svg style="left:501px;top:92px" width="25" height="17" viewBox="0 0 25 17"><path d="M1 5.500 L5 1.500 H14 V12 L10 16 H1Z" fill="#b8ccff" stroke="#2038c8" stroke-width="1"/><path d="M1 5.500 H10 L14 1.500 M10 5.500 V16" fill="none" stroke="#2038c8" stroke-width="0.800"/><path d="M10 5.500 L14 1.500 H23.500 V12 L19.500 16 H10Z" fill="#f8c868" stroke="#e01010" stroke-width="1" stroke-dasharray="1.500 1"/><path d="M10 5.500 H19.500 L23.500 1.500 M19.500 5.500 V16" fill="none" stroke="#e01010" stroke-width="0.800" stroke-dasharray="1.500 1"/></svg>
<div class="t" style="left:494px;top:115.500px">修剪体</div>
<div class="dd" style="left:545.500px;top:112px"></div>
<!-- shell -->
<svg style="left:572px;top:89px" width="23" height="22" viewBox="0 0 23 22"><path d="M1 9 L8 5.500 V1.500 L15 1 L22 4 V16 L15 21 L1 16Z" fill="#5080e8" stroke="#2848c0" stroke-width="0.800"/><path d="M8 5.500 L15 8 L22 4 L15 1 L8 1.500Z" fill="#a8c4ff"/><path d="M15 8 L22 4 V16 L15 21Z" fill="#2858d8"/><path d="M2.500 9.500 L8.500 7 L8.500 12 L13.500 13.500 V18.500 L2.500 15Z" fill="#f8a830" stroke="#e07010" stroke-width="0.700"/><path d="M8.500 7 L13.500 8.500 V13.500" fill="none" stroke="#ffe0a0" stroke-width="1"/></svg>
<div class="t" style="left:571px;top:115.500px">抽壳</div>
<!-- edge blend -->
<svg style="left:639px;top:88px" width="24" height="23" viewBox="0 0 24 23"><path d="M1 8 C1 4 4 2.500 8 2 L15 1 L23 4 V16 L15 22 H1Z" fill="#fff" stroke="#2040c8" stroke-width="0.900"/><path d="M1 8 C1 4 4 2.500 8 2 L15 1 L23 4 L15 7.500 C9 8 8 9 8 9 Z" fill="#fff"/><path d="M1 8 C1.500 4.500 4 3 8 2.500 L15 7.500 V12 L1 12.500Z" fill="#f8a828"/><path d="M1 12 H15" stroke="#e82010" stroke-width="1.300"/><path d="M1 12.500 H15 V22 H1Z" fill="#d8e8ff"/><path d="M15 7.500 L23 4 V16 L15 22Z" fill="#3058e0"/><path d="M8 2 L15 1 L23 4 L15 7.500 Z" fill="#fff" stroke="#2040c8" stroke-width="0.700"/></svg>
<div class="t" style="left:632px;top:115.500px">边倒圆</div>
<div class="dd" style="left:683.500px;top:112px"></div>
<!-- draft -->
<svg style="left:710px;top:89px" width="24" height="21" viewBox="0 0 24 21"><path d="M8 4 L12.500 1 L17 4 V10 L12.500 13 L8 10Z" fill="#88b0f8" stroke="#3060d0" stroke-width="0.800"/><path d="M8 4 L12.500 6.500 L17 4 L12.500 1Z" fill="#d0e0ff"/><path d="M12.500 6.500 V13" stroke="#3060d0" stroke-width="0.700"/><path d="M8 4 L1 14 L12.500 20 L23 14 L17 4 M12.500 6.500 V20" fill="none" stroke="#e83010" stroke-width="1.100"/><path d="M1 14 L12.500 9 L23 14" fill="none" stroke="#4868d8" stroke-width="0.800"/></svg>
<div class="t" style="left:709.500px;top:115.500px">拔模</div>
<div class="dd" style="left:755px;top:133px"></div>
<!-- offset region -->
<svg style="left:793px;top:87px" width="23" height="25" viewBox="0 0 23 25"><defs><linearGradient id="gof" x1="0" y1="0" x2="1" y2="0"><stop offset="0" stop-color="#ffd830"/><stop offset="1" stop-color="#f06010"/></linearGradient><linearGradient id="gpu" x1="0" y1="0" x2="0" y2="1"><stop offset="0" stop-color="#e8b0f0"/><stop offset="1" stop-color="#9020c0"/></linearGradient></defs><path d="M1 6.500 L11 1 L21 5.500 V17 L11 22.500 L1 18Z" fill="url(#gpu)" stroke="#7010a0" stroke-width="0.800"/><path d="M1 6.500 L11 11 V22.500 L1 18Z" fill="url(#gof)" stroke="#c02010" stroke-width="0.700"/><path d="M11 11 L21 5.500 V17 L11 22.500Z" fill="#a038c8"/><path d="M10 14 V9.500 C10 8 12.500 8 12.500 9.500 V13 L15 12.500 H19.500 C21 12.500 21 14 21 14 V22 H14 L10 18 Z" fill="#fff" stroke="#111" stroke-width="1"/><path d="M14.500 12.500 V17 H21" fill="none" stroke="#111" stroke-width="0.800"/></svg>
<div class="t" style="left:780px;top:115.500px">偏置区域</div>
<div class="dd" style="left:838px;top:112px"></div>
<!-- delete face -->
<svg style="left:863px;top:87px" width="24" height="25" viewBox="0 0 24 25"><path d="M1 6.500 L11 1 L21 5.500 V17 L11 22.500 L1 18Z" fill="url(#gpu)" stroke="#7010a0" stroke-width="0.800"/><path d="M1 6.500 L11 11 V22.500 L1 18Z" fill="url(#gof)" stroke="#c02010" stroke-width="0.700"/><path d="M11 11 L21 5.500 V17 L11 22.500Z" fill="#a038c8"/><path d="M9.500 10.500 L23 21.500 M22.500 10 L9 22.500" stroke="#222" stroke-width="2.200"/></svg>
<div class="t" style="left:856.500px;top:115.500px">删除面</div>
<div class="dd" style="left:909px;top:133px"></div>

<!-- toolbar row 3 sketch -->
<div class="tb" style="left:1px;top:145px;width:654px;height:34px;border-top:none"></div>
<div class="grip" style="left:4px;top:151px;height:22px"></div>
<svg style="left:11px;top:148px" width="25" height="26" viewBox="0 0 25 26"><path d="M1.500 3 L19 6.500 V25 L1.500 20.500Z" fill="#f4f4f0" stroke="#222" stroke-width="1.200"/><rect x="3.500" y="7.500" width="5" height="5" fill="#e8f4e0" stroke="#222" stroke-width="0.900"/><rect x="11" y="10" width="5" height="5" fill="#e8f4e0" stroke="#222" stroke-width="0.900"/><rect x="4" y="15" width="4" height="4" fill="#e8f4e0" stroke="#222" stroke-width="0.900"/><rect x="10" y="17.500" width="6.500" height="4.500" fill="#d8ecd0" stroke="#222" stroke-width="0.900"/><path d="M18.500 1 L19.700 5.500 L24 3.500 L21 7 L25 9 L20.500 9.200 L21 13.500 L18.500 10 L15 12.500 L16.700 8.500 L12.500 7 L17 6.500Z" fill="#ffe818" stroke="#e8b800" stroke-width="0.500"/></svg>
<div class="a" style="left:42px;top:149.500px;width:24.500px;height:24.500px;background:#8c9eac;border:1px solid #7c8c98"></div>
<svg style="left:44px;top:151px" width="21" height="22" viewBox="0 0 21 22"><path d="M2 3 L7 20.500" stroke="#6c6c6c" stroke-width="1.500"/><path d="M2.500 3.500 C7 0.500 12 6 19.500 2.500 L21 13 C14 17 9 11 5.500 14.500Z" fill="#b4b4b4" stroke="#787878" stroke-width="0.600"/><path d="M5 4 L8 4.500 L8.800 8 L5.800 7.500Z M11.500 5.500 L15 6 L15.500 9.500 L12 9Z M8.800 8 L12 9 L12.800 12.500 L9.500 11.500Z M15.500 9.500 L19 8.500 L19.500 12 L16 13Z M17.500 3.500 L18.500 3.200 L19 6 L15 6Z" fill="#8a8a8a"/></svg>
<div class="t" style="left:70px;top:155px;color:#a0a0a0">完成草图</div>
<!-- profile -->
<svg style="left:125px;top:150px" width="25" height="23" viewBox="0 0 25 23"><path d="M3 1 V14 C3 19 11 19 11 14 V11.500 C11 7 19.500 7 19.500 11.500 V17" fill="none" stroke="#111" stroke-width="1.300"/><circle cx="3" cy="11.500" r="2" fill="#e01010"/><circle cx="11.300" cy="11.500" r="2" fill="#e01010"/><circle cx="19.500" cy="11.500" r="2" fill="#e01010"/></svg>
<!-- line -->
<svg style="left:157px;top:151px" width="23" height="22" viewBox="0 0 23 22"><path d="M3 19 L19.500 3" stroke="#111" stroke-width="1.300"/><circle cx="3" cy="19" r="2" fill="#e01010"/><circle cx="19.500" cy="3" r="2" fill="#e01010"/></svg>
<!-- arc -->
<svg style="left:187px;top:150px" width="25" height="23" viewBox="0 0 25 23"><path d="M3.500 3 C13 2 20 8 21.500 19.500" fill="none" stroke="#111" stroke-width="1.400"/><circle cx="3.500" cy="3" r="2" fill="#e01010"/><circle cx="16.500" cy="7.500" r="2" fill="#e01010"/><circle cx="21.500" cy="19.500" r="2" fill="#e01010"/></svg>
<!-- circle -->
<svg style="left:219px;top:150px" width="23" height="23" viewBox="0 0 23 23"><circle cx="11.500" cy="11.700" r="10" fill="none" stroke="#111" stroke-width="1.300"/></svg>
<!-- fillet -->
<svg style="left:250px;top:151px" width="23" height="22" viewBox="0 0 23 22"><path d="M1 1.500 H12 C17.500 1.500 21 5 21 10 V21" fill="none" stroke="#a89090" stroke-width="1.200"/><path d="M12 1.500 H21 V10" fill="none" stroke="#a8a8a8" stroke-width="0.800" stroke-dasharray="1 1"/></svg>
<svg style="left:280px;top:151px" width="24" height="22" viewBox="0 0 24 22"><path d="M1 1.500 H13 L22 10 V21.500" fill="none" stroke="#a89090" stroke-width="1.200"/><path d="M13 1.500 H22 V10" fill="none" stroke="#a8a8a8" stroke-width="0.800" stroke-dasharray="1 1"/></svg>
<!-- rectangle -->
<svg style="left:311px;top:151px" width="25" height="21" viewBox="0 0 25 21"><rect x="3" y="3" width="19" height="14.500" fill="none" stroke="#111" stroke-width="1.300"/><circle cx="3" cy="3" r="2" fill="#e01010"/><circle cx="22" cy="17.500" r="2" fill="#e01010"/></svg>
<!-- spline -->
<svg style="left:343px;top:150px" width="24" height="23" viewBox="0 0 24 23"><path d="M2.500 11 L7.500 2 L15 21 L22 8" fill="none" stroke="#909090" stroke-width="0.900"/><path d="M2.500 11 C6 7 8 7 10 10.500 C12 14.500 15 17 17.500 12.500 C19 10 20 9 22 8" fill="none" stroke="#111" stroke-width="1.300"/><circle cx="7.500" cy="2.500" r="1.700" fill="#909090"/><circle cx="2.500" cy="11" r="1.700" fill="#909090"/><circle cx="15" cy="20.500" r="1.700" fill="#909090"/><circle cx="22" cy="8" r="1.700" fill="#909090"/><circle cx="8" cy="8" r="1.900" fill="#e01010"/><circle cx="16" cy="14" r="1.900" fill="#e01010"/></svg>
<!-- plus -->
<svg style="left:377px;top:153px" width="18" height="18" viewBox="0 0 18 18"><path d="M0 8.700 H17.500 M8.700 0 V17.500" stroke="#111" stroke-width="1.500"/></svg>
<!-- offset curve -->
<svg style="left:405px;top:152px" width="22" height="21" viewBox="0 0 22 21"><path d="M1 19.500 V8 L8 1.500 H15 C20.500 1.500 21.500 8 19 12 C17 16 14 18 10 19.500Z" fill="none" stroke="#909090" stroke-width="1"/><path d="M4.500 16.500 V9 L8 6 C10 4 12 6 11.500 8 C13 5 18 6 17 10 C16 13.500 13 15.500 10 16.500Z" fill="none" stroke="#b08888" stroke-width="1"/></svg>
<div class="dd" style="left:436px;top:160px"></div>
<div class="sep" style="left:446px;top:148px;height:28px"></div>
<!-- quick trim -->
<svg style="left:454px;top:150px" width="23" height="24" viewBox="0 0 23 24"><path d="M3 1 L13 23" stroke="#686868" stroke-width="1"/><path d="M0 15 H13" stroke="#b09090" stroke-width="1"/><path d="M13 15 H22" stroke="#888" stroke-width="0.800" stroke-dasharray="1 1.200"/><path d="M12 11 L18 5 L21 8 L15 13.500Z" fill="#b0a890" stroke="#989078" stroke-width="0.600"/></svg>
<svg style="left:485px;top:150px" width="23" height="24" viewBox="0 0 23 24"><path d="M3 1 L14 23" stroke="#686868" stroke-width="1"/><path d="M0 16 H12" stroke="#b09090" stroke-width="1"/><path d="M10 14.500 L19 3.500 L22 6.500 L12.500 16.500Z" fill="#b0a890" stroke="#989078" stroke-width="0.600"/></svg>
<div class="sep" style="left:514.500px;top:148px;height:28px"></div>
<!-- rapid dimension -->
<svg style="left:521px;top:150px" width="25" height="23" viewBox="0 0 25 23"><path d="M1.500 7 V19 M23 7 V19 M1.500 13 H23" stroke="#b08888" stroke-width="1.100" fill="none"/><path d="M2 13 L6 11 V15Z M22.500 13 L18.500 11 V15Z" fill="#b08888"/><path d="M15.500 0.500 L9 10 H13 L8.500 20 L18.500 7.500 H14 L18 0.500Z" fill="#b0a888" stroke="#989078" stroke-width="0.500"/></svg>
<div class="dd" style="left:553px;top:160px"></div>
<div class="sep" style="left:564px;top:148px;height:28px"></div>
<!-- constraints -->
<svg style="left:571px;top:152px" width="22" height="21" viewBox="0 0 22 21"><path d="M1 12 L11 1.500 M5.500 13 L15 3" stroke="#a888a8" stroke-width="1.200"/><path d="M10 19.500 H21 M15.500 19.500 V11" stroke="#a888a8" stroke-width="1.200"/></svg>
<svg style="left:601px;top:150px" width="25" height="25" viewBox="0 0 25 25"><path d="M1 5 L7.500 9.500 L1 14.500Z" fill="#80b888"/><path d="M10 9.500 L20 0.500 M14 11 L24 1.500" stroke="#a888a8" stroke-width="1.200"/><path d="M12 23.500 H24 M18 23.500 V13.500" stroke="#a888a8" stroke-width="1.200"/></svg>
<div class="dd" style="left:633px;top:160px"></div>
<div class="dd" style="left:643.500px;top:167px"></div>
<!-- toolbar row 4 -->
<div class="tb" style="left:656px;top:179px;width:114px;height:33px"></div>
<div class="tb" style="left:770px;top:179px;width:244px;height:33px"></div>
<div class="grip" style="left:659px;top:184px;height:23px"></div>
<div class="grip" style="left:774px;top:184px;height:23px"></div>
<svg style="left:667px;top:187px" width="24" height="19" viewBox="0 0 24 19"><path d="M0.500 11 H8 L13 3 C14.500 1 16 1 17 3 L19 11 H23.500 L19 17.500 H0.500 L4 11" fill="#fff" stroke="#222" stroke-width="1"/><path d="M8 11 L13 3 C14.500 1 16 1 17 3 L11.500 17.500 M19 11 L15 17.500" fill="none" stroke="#222" stroke-width="1"/><path d="M13 3 L7 17.500" stroke="#222" stroke-width="0.800"/></svg>
<svg style="left:697px;top:186px" width="25" height="21" viewBox="0 0 25 21"><path d="M1 6.500 L9 4 L14 8 L22 1 L24.500 8 L16 18 C11 21 6 20.500 3.500 17 Z" fill="#f4f4f4" stroke="#222" stroke-width="1"/><path d="M9 4 L6 14 L14 8 M6 14 L3.500 17 M6 14 C9 17 13 17 16 18 M14 8 L16.500 12" fill="none" stroke="#222" stroke-width="0.900"/></svg>
<svg style="left:728px;top:185px" width="26" height="22" viewBox="0 0 26 22"><path d="M1 1 H8 M1 21 H8" stroke="#111" stroke-width="1.800"/><path d="M4.500 1.500 V5 M4.500 8 V10 M4.500 13 V15 M4.500 17.500 V21" stroke="#111" stroke-width="1.800"/><rect x="2.500" y="8.500" width="4" height="5" fill="#e01010"/><path d="M8 9.500 H15 L17 8 H21 V15.500 H12 C10 15 9 13 10 12 H8Z" fill="#f0c898" stroke="#704820" stroke-width="0.700"/><rect x="20.500" y="8" width="4.500" height="8" fill="#2838c8"/></svg>
<div class="dd" style="left:758px;top:201px"></div>
<svg style="left:783px;top:186px" width="22" height="20" viewBox="0 0 22 20"><path d="M11 1.500 L20.800 18.800 H1.200 Z" fill="none" stroke="#111" stroke-width="1.400"/></svg>
<svg style="left:812px;top:185px" width="24" height="23" viewBox="0 0 24 23"><rect x="0.800" y="0.800" width="20" height="17" fill="#fff" stroke="#909090" stroke-width="0.800"/><rect x="0.800" y="0.800" width="20" height="3" fill="#7040e0"/><path d="M0.800 7.500 H20.800 M0.800 11 H20.800 M0.800 14.500 H20.800 M5.800 3.800 V17.800 M10.800 3.800 V17.800 M15.800 3.800 V17.800" stroke="#909090" stroke-width="0.800"/><path d="M17 12.500 L22.500 21.500 H11.500Z" fill="#fff" stroke="#e01010" stroke-width="1.400"/></svg>
<svg style="left:843px;top:185px" width="24" height="23" viewBox="0 0 24 23"><path d="M1 17 V4 H7 L9 6 H17 V9 H5Z" fill="#e8c850" stroke="#b89828" stroke-width="0.700"/><path d="M1 17 L5 8 H21 L17 17Z" fill="#f8e488" stroke="#b89828" stroke-width="0.700"/><path d="M15.500 3 V11 M11.500 7 H19.500 M8 11 V19 M4 15 H12 M18.500 14 V22 M14.500 18 H22.500" stroke="#111" stroke-width="1.100"/><circle cx="15.500" cy="7" r="1.500" fill="#e01010"/><circle cx="8" cy="15" r="1.500" fill="#e01010"/><circle cx="18.500" cy="18" r="1.500" fill="#e01010"/></svg>
<svg style="left:874px;top:185px" width="24" height="23" viewBox="0 0 24 23"><path d="M1 17 V4 H7 L9 6 H17 V9 H5Z" fill="#e8c850" stroke="#b89828" stroke-width="0.700"/><path d="M1 17 L5 8 H21 L17 17Z" fill="#f8e488" stroke="#b89828" stroke-width="0.700"/><circle cx="15" cy="9.500" r="3.800" fill="none" stroke="#222" stroke-width="1.200"/><circle cx="9" cy="16.500" r="3.300" fill="none" stroke="#222" stroke-width="1.200"/><circle cx="19" cy="18.500" r="3.300" fill="none" stroke="#222" stroke-width="1.200"/></svg>
<svg style="left:906px;top:185px" width="22" height="22" viewBox="0 0 22 22"><rect x="0.700" y="0.700" width="20.300" height="20.300" fill="#fff" stroke="#111" stroke-width="1.400"/><path d="M3 11.500 H15 M3 14 H13 M3 16.500 H12 M3 19 H13" stroke="#333" stroke-width="0.900"/></svg>
<svg style="left:936px;top:185px" width="24" height="23" viewBox="0 0 24 23"><path d="M1.500 13 V22 M22.500 13 V22 M2 17.500 H22" stroke="#e01010" stroke-width="1.200" fill="none"/><path d="M2 17.500 L6.500 15.500 V19.500Z M22 17.500 L17.500 15.500 V19.500Z" fill="#e01010"/><path d="M7 9 L12 5 L17 10 L11 13.500Z" fill="#e8c860" stroke="#a88828" stroke-width="0.600"/><path d="M13 6 L17 1 C18.500 0 20 1.500 19 3 L15.500 8Z" fill="#7888d8" stroke="#4858a8" stroke-width="0.500"/></svg>
<div class="sep" style="left:966px;top:182px;height:28px"></div>
<svg style="left:975px;top:184px" width="21" height="13" viewBox="0 0 21 13"><path d="M2 3 L5 0.500 L9 2 L8 7 M12 2 L16 0.500 L19 3.500 L14 7" fill="#383838" stroke="#181818" stroke-width="1"/><circle cx="5" cy="8.500" r="3.800" fill="#4868c8" stroke="#181818" stroke-width="1"/><circle cx="16" cy="8.500" r="3.800" fill="#4868c8" stroke="#181818" stroke-width="1"/><rect x="8" y="3" width="5" height="3.500" fill="#282828"/></svg>
<div class="t" style="left:973px;top:196px;font-size:11.500px;letter-spacing:-0.700px;font-weight:bold"><span style="color:#111;font-weight:normal">10</span><span style="color:#b01818">H7</span></div>
<div class="dd" style="left:1003.500px;top:201px"></div>

<!-- selection bar -->
<div class="a" style="left:5px;top:219px;width:115px;height:17px;background:#fff;border:1px solid #8a8a8a;border-radius:2px"></div>
<div class="t" style="left:7px;top:220.500px">没有选择过滤器</div>
<div class="a" style="left:102.500px;top:219.500px;width:16.500px;height:16px;background:linear-gradient(#fff,#dce8ff);border:1.500px solid #2a56c8;border-radius:2px"></div>
<div class="dd" style="left:105.500px;top:224px;border-left-width:5px;border-right-width:5px;border-top-width:6px"></div>
<div class="a" style="left:128.500px;top:219px;width:121px;height:17px;background:#fff;border:1px solid #8a8a8a;border-radius:2px"></div>
<div class="t" style="left:130.500px;top:220.500px">仅在工作部件内</div>
<div class="a" style="left:232px;top:219.500px;width:16.500px;height:16px;background:linear-gradient(#fff,#dce8ff);border:1.500px solid #2a56c8;border-radius:2px"></div>
<div class="dd" style="left:235px;top:224px;border-left-width:5px;border-right-width:5px;border-top-width:6px"></div>
<svg style="left:257px;top:219px" width="17" height="17" viewBox="0 0 17 17"><path d="M1 8 L6 5 V13 L1 16Z M6 5 L9 6.500 V14.500 L6 13" fill="#a8a8a0" stroke="#888880" stroke-width="0.700"/><circle cx="11.500" cy="5.500" r="3" fill="none" stroke="#a09870" stroke-width="1.800"/><circle cx="12" cy="11" r="3" fill="none" stroke="#a09870" stroke-width="1.800"/><path d="M4.500 1 V6 M2 3.500 H7" stroke="#888" stroke-width="1"/></svg>
<div class="sep" style="left:279.500px;top:217px;height:21px"></div>
<svg style="left:286px;top:219px" width="17" height="17" viewBox="0 0 17 17"><path d="M1.500 6.500 C3 3 8 3 10 6" fill="none" stroke="#8898a8" stroke-width="1.600"/><path d="M0.500 4.500 L1.500 9 L5.500 6.500Z" fill="#8898a8"/><path d="M7 8.500 H16 L12.500 12.500 V16.500 H10.500 V12.500Z" fill="#c8b070" stroke="#a89050" stroke-width="0.500"/></svg>
<div class="a" style="left:306px;top:219px;width:16.500px;height:16px;border:1.500px solid #d82020;background:#f4ecec"></div>
<svg style="left:307px;top:220px" width="15" height="14" viewBox="0 0 15 14"><path d="M5 0.500 V9 M0.500 4.500 H9.500" stroke="#111" stroke-width="1"/><circle cx="5" cy="4.500" r="1.500" fill="#e01010"/><path d="M7.500 8 H14 L11.500 10.500 V13.500 H10 V10.500Z" fill="#f8b018" stroke="#c08010" stroke-width="0.400"/></svg>
<div class="dd" style="left:328.500px;top:225.500px"></div>
<svg style="left:340px;top:219px" width="17" height="17" viewBox="0 0 17 17"><path d="M2 5 C3.500 1.500 8.500 1.500 10 4.500" fill="none" stroke="#a8a8a8" stroke-width="1.600"/><path d="M0.500 3 L1.500 7.500 L5.500 5Z" fill="#a8a8a8"/><circle cx="10.500" cy="11" r="3.500" fill="none" stroke="#c09898" stroke-width="1"/><path d="M10.500 5.500 V16.500 M5 11 H16" stroke="#c09898" stroke-width="1"/></svg>
<svg style="left:363px;top:219px" width="17" height="17" viewBox="0 0 17 17"><path d="M1 3 L6 1 L9 3.500 L7 5.500 L10 6.500 L9.500 9 L4 6.500Z" fill="#a0a0a0"/><rect x="10" y="6" width="5.500" height="10" fill="#b8b8b0" stroke="#a0a098" stroke-width="0.600"/><rect x="11.500" y="9" width="3" height="2.500" fill="#d8d8d0"/></svg>
<div class="sep" style="left:385.500px;top:217px;height:21px"></div>
<svg style="left:391px;top:219px" width="19" height="16" viewBox="0 0 19 16"><rect x="1.800" y="1.800" width="14.500" height="12.500" fill="none" stroke="#111" stroke-width="1.200" stroke-dasharray="2.500 1.500"/><circle cx="1.800" cy="1.800" r="1.500" fill="#e01010"/><circle cx="16.300" cy="14.300" r="1.500" fill="#e01010"/></svg>
<div class="dd" style="left:415.500px;top:225.500px"></div>
<div class="sep" style="left:426.500px;top:217px;height:21px"></div>
<svg style="left:432px;top:219px" width="19" height="17" viewBox="0 0 19 17"><path d="M1 9 L7 2.500 L17 5 L18 11.500 L12 16 L2 13.500Z" fill="#e8ecf8" stroke="#333" stroke-width="0.900"/><path d="M7 2.500 C10 5 11 8 12 16 M1 9 C5 8 9 9 12 10.500 M17 5 L12 10.500" fill="none" stroke="#333" stroke-width="0.800"/><path d="M6 5 L13 8" stroke="#e01010" stroke-width="1.600"/></svg>
<svg style="left:455px;top:218px" width="18" height="18" viewBox="0 0 18 18"><path d="M1 5.500 L8 2 L17 5 V14 L10 17.500 L1 14.500Z" fill="#58a0f0" stroke="#2060c0" stroke-width="0.700"/><path d="M1 5.500 L10 8.500 L17 5 L8 2Z" fill="#b8dcff"/><path d="M10 8.500 V17.500 L17 14 V5Z" fill="#2870d8"/><path d="M8 2 V11 L1 14.500 M8 11 L17 14" fill="none" stroke="#e06060" stroke-width="0.600"/></svg>
<div class="sep" style="left:477.500px;top:217px;height:21px"></div>
<!-- snap buttons -->
<div class="a" style="left:482.500px;top:216.500px;width:22px;height:21px;background:#fff;border:1px solid #707070;border-radius:2.500px"></div>
<div class="a" style="left:505.500px;top:216.500px;width:22px;height:21px;background:#fff;border:1px solid #707070;border-radius:2.500px"></div>
<div class="a" style="left:528.500px;top:216.500px;width:22px;height:21px;background:#fff;border:1px solid #707070;border-radius:2.500px"></div>
<div class="a" style="left:574.500px;top:216.500px;width:22px;height:21px;background:#fff;border:1px solid #707070;border-radius:2.500px"></div>
<div class="a" style="left:620.500px;top:216.500px;width:22px;height:21px;background:#fff;border:1px solid #707070;border-radius:2.500px"></div>
<div class="a" style="left:666.500px;top:216.500px;width:22px;height:21px;background:#fff;border:1px solid #707070;border-radius:2.500px"></div>
<div class="a" style="left:689.500px;top:216.500px;width:22px;height:21px;background:#fff;border:1px solid #707070;border-radius:2.500px"></div>
<svg style="left:484px;top:218px" width="19" height="18" viewBox="0 0 19 18"><path d="M0.500 1.500 L4.500 4.500 L0.500 7.500Z" fill="#18a838"/><path d="M0.500 10 L4.500 13 L0.500 16.500Z" fill="#e01818"/><path d="M6 3.500 L16 14 M16 3.500 L6 14" stroke="#111" stroke-width="0.900"/><g fill="#fff" stroke="#111" stroke-width="0.900"><circle cx="6.500" cy="4" r="1.800"/><circle cx="15.500" cy="4" r="1.800"/><circle cx="6.500" cy="13.500" r="1.800"/><circle cx="15.500" cy="13.500" r="1.800"/><circle cx="11" cy="3" r="1.500"/><circle cx="11" cy="14.500" r="1.500"/></g><path d="M11 6 L14 8.800 L11 11.500 L8 8.800Z" fill="#f8d818" stroke="#a08000" stroke-width="0.500"/></svg>
<svg style="left:508px;top:219px" width="17" height="16" viewBox="0 0 17 16"><path d="M2 14.500 L15 2" stroke="#111" stroke-width="1.100"/><circle cx="15" cy="2" r="1.700" fill="#e01010"/></svg>
<svg style="left:531px;top:219px" width="17" height="16" viewBox="0 0 17 16"><path d="M1.500 14.500 L15.500 1.500" stroke="#111" stroke-width="1.100"/><circle cx="8.500" cy="8" r="1.700" fill="#e01010"/></svg>
<svg style="left:555px;top:219px" width="15" height="17" viewBox="0 0 15 17"><path d="M1 1.500 C6 1.500 6.500 4 6.500 8 C6.500 12 9 14.500 14 14.500" fill="none" stroke="#111" stroke-width="1.200"/><circle cx="6.500" cy="8" r="1.700" fill="#e01010"/></svg>
<svg style="left:576.500px;top:218px" width="18" height="18" viewBox="0 0 18 18"><path d="M2 11 L6 2.500 L11 15.500 L16 7" fill="none" stroke="#8030d0" stroke-width="1.100"/><path d="M2 11 C4 7 6 7 8 9.500 C10 12 12 11 13 9 C14 7.500 15 7 16 7" fill="none" stroke="#8030d0" stroke-width="0.800"/><g fill="#e01010"><circle cx="6" cy="2.500" r="1.600"/><circle cx="2" cy="11" r="1.600"/><circle cx="11" cy="15.500" r="1.600"/><circle cx="16" cy="7" r="1.600"/><circle cx="8.500" cy="9.500" r="1.400"/></g></svg>
<svg style="left:600px;top:219px" width="17" height="16" viewBox="0 0 17 16"><path d="M8.500 0.500 V15.500" stroke="#111" stroke-width="1.100"/><path d="M1 12 C3 6.500 14 6.500 16 12" fill="none" stroke="#111" stroke-width="1.100"/><circle cx="8.500" cy="8" r="1.700" fill="#e01010"/></svg>
<svg style="left:622.500px;top:218px" width="18" height="18" viewBox="0 0 18 18"><circle cx="9" cy="9" r="7.300" fill="none" stroke="#111" stroke-width="1.100"/><circle cx="9" cy="9" r="1.800" fill="#e01010"/></svg>
<svg style="left:646px;top:218px" width="18" height="18" viewBox="0 0 18 18"><circle cx="9" cy="9" r="6.500" fill="none" stroke="#111" stroke-width="1.100"/><g fill="#e01010"><circle cx="9" cy="2.500" r="1.700"/><circle cx="9" cy="15.500" r="1.700"/><circle cx="2.500" cy="9" r="1.700"/><circle cx="15.500" cy="9" r="1.700"/></g></svg>
<svg style="left:669px;top:219px" width="17" height="16" viewBox="0 0 17 16"><path d="M8.500 0.500 V15.500 M1 8 H16" stroke="#111" stroke-width="1.200"/><circle cx="8.500" cy="8" r="1.600" fill="#e01010"/></svg>
<svg style="left:692px;top:219px" width="17" height="16" viewBox="0 0 17 16"><path d="M2 14 L15.500 1.500" stroke="#111" stroke-width="1.100"/><circle cx="5" cy="11.500" r="1.700" fill="#e01010"/></svg>
<svg style="left:715px;top:218px" width="17" height="18" viewBox="0 0 17 18"><path d="M1 8 C3 2 11 1 15.500 4.500 C11 6 9.500 10 10.500 16.500 L6.500 13 C5 11 3 10 1 8Z" fill="#80b8f8" stroke="#3878d0" stroke-width="0.700"/><path d="M3 7 C6 4 10 4 13 5 C9 7 8.500 10 9 13" fill="#d8ecff"/><circle cx="9" cy="6" r="1.600" fill="#e01010"/></svg>
<div class="sep" style="left:737.500px;top:217px;height:21px"></div>
<svg style="left:746px;top:219px" width="13" height="17" viewBox="0 0 13 17"><path d="M1 1 L12 3.500 V16.500 L1 13.500Z" fill="none" stroke="#111" stroke-width="1.100"/><path d="M4.700 2 V14.500 M8.400 2.800 V15.500 M1 5.200 L12 7.800 M1 9.400 L12 12.200" stroke="#111" stroke-width="1"/><circle cx="8.400" cy="7" r="1.600" fill="#e01010"/></svg>
<div class="dd" style="left:1354px;top:229px"></div>

<!-- left resource bar -->
<div class="a" style="left:0;top:241px;width:31px;height:464.500px;background:linear-gradient(90deg,#b2b2b2 0,#adadad 2px,#adadad 26px,#8c8c8c 30.500px)"></div>
<div class="a" style="left:30px;top:241px;width:3px;height:464px;background:linear-gradient(90deg,#8c8c8c 0,#f4f4f4 1px,#f4f4f4 100%)"></div>
<div class="a" style="left:33px;top:241px;width:293px;height:464px;background:#ebebeb;border-top:1px solid #8a8a8a;border-right:1px solid #7e7e7e;border-bottom:1px solid #7e7e7e"></div>
<div class="a" style="left:4px;top:286.5px;width:27px;height:40px;background:linear-gradient(90deg,#dedede 0,#dadada 80%,#c4c4c4 100%);border:1px solid #6e6e6e;border-right:none;border-radius:5px 0 0 5px;box-shadow:inset 1px 1px 0 #f6f6f6,inset 0 -1px 0 #f0f0f0"></div>
<div class="a" style="left:4px;top:328px;width:27px;height:40px;background:linear-gradient(90deg,#dedede 0,#dadada 80%,#c4c4c4 100%);border:1px solid #6e6e6e;border-right:none;border-radius:5px 0 0 5px;box-shadow:inset 1px 1px 0 #f6f6f6,inset 0 -1px 0 #f0f0f0"></div>
<div class="a" style="left:2px;top:370px;width:32px;height:42px;background:#ebebeb;border:1px solid #8a8a8a;border-right:none;border-radius:5px 0 0 5px"></div>
<div class="a" style="left:4px;top:412.5px;width:27px;height:40px;background:linear-gradient(90deg,#dedede 0,#dadada 80%,#c4c4c4 100%);border:1px solid #6e6e6e;border-right:none;border-radius:5px 0 0 5px;box-shadow:inset 1px 1px 0 #f6f6f6,inset 0 -1px 0 #f0f0f0"></div>
<div class="a" style="left:4px;top:466.5px;width:27px;height:40px;background:linear-gradient(90deg,#dedede 0,#dadada 80%,#c4c4c4 100%);border:1px solid #6e6e6e;border-right:none;border-radius:5px 0 0 5px;box-shadow:inset 1px 1px 0 #f6f6f6,inset 0 -1px 0 #f0f0f0"></div>
<div class="a" style="left:4px;top:520.5px;width:27px;height:40px;background:linear-gradient(90deg,#dedede 0,#dadada 80%,#c4c4c4 100%);border:1px solid #6e6e6e;border-right:none;border-radius:5px 0 0 5px;box-shadow:inset 1px 1px 0 #f6f6f6,inset 0 -1px 0 #f0f0f0"></div>
<div class="a" style="left:4px;top:574.5px;width:27px;height:40px;background:linear-gradient(90deg,#dedede 0,#dadada 80%,#c4c4c4 100%);border:1px solid #6e6e6e;border-right:none;border-radius:5px 0 0 5px;box-shadow:inset 1px 1px 0 #f6f6f6,inset 0 -1px 0 #f0f0f0"></div>
<div class="a" style="left:4px;top:616.5px;width:27px;height:19px;background:linear-gradient(90deg,#dedede 0,#dadada 80%,#c4c4c4 100%);border:1px solid #6e6e6e;border-right:none;border-radius:5px 0 0 5px;box-shadow:inset 1px 1px 0 #f6f6f6,inset 0 -1px 0 #f0f0f0"></div>
<svg style="left:8px;top:248.500px" width="14" height="14" viewBox="0 0 14 14"><circle cx="7" cy="7" r="4.600" fill="none" stroke="#1a1a1a" stroke-width="1.700"/><g stroke="#1a1a1a" stroke-width="2"><path d="M7 0.300 V2.500 M7 11.500 V13.700 M0.300 7 H2.500 M11.500 7 H13.700 M2.300 2.300 L3.800 3.800 M10.200 10.200 L11.700 11.700 M2.300 11.700 L3.800 10.200 M10.200 3.800 L11.700 2.300"/></g><circle cx="7" cy="7" r="0.900" fill="#1a1a1a"/></svg>
<svg style="left:7.400px;top:293.500px" width="21" height="24.500" viewBox="0 0 23 28" preserveAspectRatio="none"><g fill="#f8c820" stroke="#c89000" stroke-width="0.600"><path d="M1 3 L5 1 L9 3 V8 L5 10 L1 8Z"/><path d="M1 10 L5 8 L9 10 V15 L5 17 L1 15Z"/><path d="M6.500 8 L10.500 6 L14.500 8 V13 L10.500 15 L6.500 13Z"/><path d="M12.500 20 L16.500 18 L20.500 20 V25 L16.500 27 L12.500 25Z"/></g><g fill="#fff0a0"><path d="M1 3 L5 5 L9 3 L5 1Z M6.500 8 L10.500 10 L14.500 8 L10.500 6Z M12.500 20 L16.500 22 L20.500 20 L16.500 18Z"/></g><path d="M4.500 18 V29 M4.500 23.500 H10" stroke="#1010c8" stroke-width="1.300" fill="none"/><path d="M13 14.500 H22.500" stroke="#111" stroke-width="1.200"/></svg>
<svg style="left:7.400px;top:329.500px" width="21" height="29" viewBox="0 0 23 28" preserveAspectRatio="none"><path d="M1 2 L10 8.500 L1 15Z M22 2 L13 8.500 L22 15Z" fill="#1010d8"/><path d="M11.500 1 V28" stroke="#111" stroke-width="1" stroke-dasharray="2.500 1.500"/><rect x="1" y="18.500" width="7.500" height="8" fill="#f8e818" stroke="#111" stroke-width="0.800"/><path d="M14 27 V18 L22.500 27Z" fill="#e01010" stroke="#801010" stroke-width="0.600"/></svg>
<svg style="left:6.200px;top:378.500px" width="22" height="23.500" viewBox="0 0 23 29" preserveAspectRatio="none"><path d="M1 4 V11 C1 14 9 14 9 11 V4" fill="#d890c8" stroke="#901878" stroke-width="0.800"/><ellipse cx="5" cy="4" rx="4" ry="2" fill="#f0c0e4" stroke="#901878" stroke-width="0.800"/><path d="M12 11.500 H21.500" stroke="#111" stroke-width="1.200"/><path d="M5 17 V28 M5 22.500 H10.500" stroke="#1010c8" stroke-width="1.300" fill="none"/><circle cx="16.500" cy="22.500" r="4" fill="none" stroke="#901878" stroke-width="1.200"/><circle cx="16.500" cy="22.500" r="1.500" fill="none" stroke="#901878" stroke-width="1"/></svg>
<svg style="left:5.400px;top:421.500px" width="23.500" height="21" viewBox="0 0 25 31" preserveAspectRatio="none"><path d="M1 10 L5 4 L9 4 V28 L5 30 H1Z" fill="#f08818" stroke="#a05008" stroke-width="0.600"/><path d="M7 9 L11 3 L15 3 V27 L11 30 H7Z" fill="#38b838" stroke="#187818" stroke-width="0.600"/><path d="M13 9 L18 2 L24 1 V24 L19 30 H13Z" fill="#3878e0" stroke="#1848a8" stroke-width="0.600"/><path d="M1 10 H5 V30 M7 9 H11 V30 M13 9 H19 V30" fill="none" stroke="#fff" stroke-width="0.700" opacity="0.700"/><path d="M19 9 L24 1 M15 13 H18 M15 16 H18 M2 14 H4 M8 14 H10" stroke="#fff" stroke-width="0.800" opacity="0.800"/></svg>
<svg style="left:6px;top:470px" width="25" height="33" viewBox="0 0 25 33"><circle cx="8.500" cy="22" r="8" fill="#1868e0" stroke="#0838a0" stroke-width="0.800"/><ellipse cx="7" cy="18.500" rx="5" ry="3.500" fill="#78b0ff" opacity="0.700"/><circle cx="8.500" cy="17.800" r="1.500" fill="#fff"/><path d="M6.500 20.500 H9.700 V26 H11 V27.300 H6.300 V26 H7.500 V21.800 H6.500Z" fill="#fff"/><path d="M10 10 C15 10 19 14 19 19" fill="none" stroke="#2868e0" stroke-width="2.400"/><path d="M10 4.500 C18.500 4.500 24 11 24 19" fill="none" stroke="#2868e0" stroke-width="2.600"/></svg>
<svg style="left:9px;top:525px" width="19" height="30" viewBox="0 0 19 30"><path d="M1 1 H12.500 L18 6.500 V22.500 H1Z" fill="#fff" stroke="#2848c8" stroke-width="1.300"/><path d="M12.500 1 V6.500 H18" fill="none" stroke="#2848c8" stroke-width="1"/><circle cx="9.500" cy="14.500" r="5.500" fill="#1868d8" stroke="#083898" stroke-width="0.600"/><path d="M6 12 C8 10 11 11 11.500 13 C12 15.500 9 16 8 18.500 C6 17 5 14 6 12Z" fill="#38b040"/><path d="M12 16 C13.500 15.500 14 17 13 18.500Z" fill="#38b040"/></svg>
<svg style="left:6px;top:579px" width="24" height="32" viewBox="0 0 24 32"><defs><radialGradient id="gclk" cx="0.400" cy="0.350" r="0.700"><stop offset="0" stop-color="#ffffff"/><stop offset="0.700" stop-color="#e0ecff"/><stop offset="1" stop-color="#98b8e8"/></radialGradient></defs><circle cx="12" cy="16.500" r="10.800" fill="#c8c8c8" stroke="#606060" stroke-width="1"/><circle cx="12" cy="16.500" r="8.800" fill="url(#gclk)" stroke="#808890" stroke-width="0.600"/><path d="M12 9.500 V16.500 H17.500" fill="none" stroke="#111" stroke-width="1.500"/><g fill="#333"><circle cx="12" cy="9" r="0.600"/><circle cx="12" cy="24" r="0.600"/><circle cx="4.500" cy="16.500" r="0.600"/><circle cx="19.500" cy="16.500" r="0.600"/></g></svg>
<svg style="left:7px;top:622px" width="22" height="14" viewBox="0 0 22 14"><defs><linearGradient id="gclr" x1="0" y1="0" x2="0" y2="1"><stop offset="0" stop-color="#f02010"/><stop offset="0.450" stop-color="#f8e020"/><stop offset="1" stop-color="#28d028"/></linearGradient></defs><rect x="1" y="1" width="9" height="12" fill="url(#gclr)"/><path d="M10 9 L19 6 L10 12Z" fill="#fff" opacity="0.900"/></svg>
<svg style="left:2px;top:632px" width="29" height="8" viewBox="0 0 29 8"><path d="M0 8 V5 C3 7 5 2 9 2 C13 2 15 5 18 5 C22 5 23 3 29 5 V8Z" fill="#adadad"/><path d="M0 5 C3 7 5 2 9 2 C13 2 15 5 18 5 C22 5 23 3 29 5" fill="none" stroke="#707070" stroke-width="0.800"/></svg>
<div class="a" style="left:8px;top:640px;width:15.500px;height:14.500px;background:linear-gradient(#f0f0f0,#c8c8c8);border:1px solid #787878"></div>
<div class="a" style="left:8px;top:656px;width:15.500px;height:14.500px;background:linear-gradient(#f0f0f0,#c8c8c8);border:1px solid #787878"></div>
<div class="a" style="left:8px;top:672px;width:15.500px;height:14.500px;background:linear-gradient(#f0f0f0,#c8c8c8);border:1px solid #787878"></div>
<div class="a" style="left:8px;top:688px;width:15.500px;height:14.500px;background:linear-gradient(#f0f0f0,#c8c8c8);border:1px solid #787878"></div>
<svg style="left:11px;top:643px" width="10" height="9" viewBox="0 0 10 9"><path d="M0.500 1 H9.500" stroke="#a8a8a8" stroke-width="1.200"/><path d="M5 3 L9 8 H1Z" fill="#a8a8a8"/></svg>
<svg style="left:11px;top:660px" width="10" height="8" viewBox="0 0 10 8"><path d="M5 1 L9.500 7 H0.500Z" fill="#a8a8a8"/></svg>
<svg style="left:11px;top:676px" width="10" height="8" viewBox="0 0 10 8"><path d="M5 7 L9.500 1 H0.500Z" fill="#3c3c3c"/></svg>
<svg style="left:11px;top:691px" width="10" height="9" viewBox="0 0 10 9"><path d="M5 6 L9 1 H1Z" fill="#222"/><path d="M0.500 8 H9.500" stroke="#3c3c3c" stroke-width="1.200"/></svg>
<div class="t" style="left:43px;top:250.500px;font-size:13px;line-height:13px;height:13px;font-weight:bold;letter-spacing:-0.200px">部件导航器</div>
<div class="a" style="left:298px;top:252px;width:13px;height:12px;border:1px solid #000;border-top:2px solid #000"></div>
<div class="a" style="left:38px;top:272px;width:278px;height:416px;background:#fff;border:1px solid #6e6e6e"></div>
<div class="a" style="left:39px;top:273px;width:276px;height:16px;background:linear-gradient(#f6f6f6 0,#f0f0f0 45%,#dcdcdc 55%,#d4d4d4 100%)"></div>
<div class="a" style="left:39px;top:289px;width:276px;height:1px;background:#7e7e7e"></div>
<div class="a" style="left:239px;top:274px;width:1px;height:15px;background:#a8a8a8"></div><div class="a" style="left:240px;top:274px;width:1px;height:15px;background:#fff"></div>
<div class="t" style="left:46px;top:275px">名称</div>
<div class="t" style="left:246px;top:275px">最新</div>
<svg style="left:85px;top:277.500px" width="11" height="7" viewBox="0 0 11 7"><path d="M5.500 0.300 L10.800 6.500 H0.200Z" fill="#1a1a1a"/></svg>
<div class="a" style="left:39px;top:290px;width:276px;height:20px;background:#fff;border-bottom:1px solid #dedede"></div>
<div class="a" style="left:39px;top:310px;width:276px;height:20px;background:#f7f7f7;border-bottom:1px solid #dedede"></div>
<div class="a" style="left:39px;top:330px;width:276px;height:20px;background:#fff;border-bottom:1px solid #dedede"></div>
<div class="a" style="left:39px;top:350px;width:276px;height:20px;background:#f7f7f7;border-bottom:1px solid #dedede"></div>
<div class="a" style="left:39px;top:370px;width:276px;height:20px;background:#fff;border-bottom:1px solid #dedede"></div>
<div class="a" style="left:39px;top:390px;width:276px;height:20px;background:#f7f7f7;border-bottom:1px solid #dedede"></div>
<div class="a" style="left:39px;top:410px;width:276px;height:20px;background:#fff;border-bottom:1px solid #dedede"></div>
<div class="a" style="left:39px;top:430px;width:276px;height:20px;background:#f7f7f7;border-bottom:1px solid #dedede"></div>
<div class="a" style="left:39px;top:450px;width:276px;height:20px;background:#fff;border-bottom:1px solid #dedede"></div>
<div class="a" style="left:39px;top:470px;width:276px;height:20px;background:#f7f7f7;border-bottom:1px solid #dedede"></div>
<div class="a" style="left:39px;top:490px;width:276px;height:20px;background:#fff;border-bottom:1px solid #dedede"></div>
<div class="a" style="left:39px;top:510px;width:276px;height:20px;background:#f7f7f7;border-bottom:1px solid #dedede"></div>
<div class="a" style="left:39px;top:530px;width:276px;height:20px;background:#fff;border-bottom:1px solid #dedede"></div>
<div class="a" style="left:39px;top:550px;width:276px;height:20px;background:#f7f7f7;border-bottom:1px solid #dedede"></div>
<div class="a" style="left:39px;top:570px;width:276px;height:20px;background:#fff;border-bottom:1px solid #dedede"></div>
<div class="a" style="left:39px;top:590px;width:276px;height:20px;background:#f7f7f7;border-bottom:1px solid #dedede"></div>
<div class="a" style="left:39px;top:610px;width:276px;height:20px;background:#fff;border-bottom:1px solid #dedede"></div>
<div class="a" style="left:39px;top:630px;width:276px;height:20px;background:#f7f7f7;border-bottom:1px solid #dedede"></div>
<div class="a" style="left:39px;top:650px;width:276px;height:19px;background:#fff;border-bottom:1px solid #dedede"></div>
<div class="a" style="left:239px;top:290px;width:1px;height:379px;background:#dcdcdc"></div>
<div class="a" style="left:49px;top:300px;width:1px;height:52px;background-image:repeating-linear-gradient(180deg,#909090 0,#909090 1px,transparent 1px,transparent 2px)"></div>
<div class="a" style="left:50px;top:299.500px;width:9px;height:1px;background-image:repeating-linear-gradient(90deg,#909090 0,#909090 1px,transparent 1px,transparent 2px)"></div>
<div class="a" style="left:53px;top:319.500px;width:6px;height:1px;background-image:repeating-linear-gradient(90deg,#909090 0,#909090 1px,transparent 1px,transparent 2px)"></div>
<div class="a" style="left:53px;top:339.500px;width:6px;height:1px;background-image:repeating-linear-gradient(90deg,#909090 0,#909090 1px,transparent 1px,transparent 2px)"></div>
<div class="a" style="left:53px;top:359.500px;width:5px;height:1px;background-image:repeating-linear-gradient(90deg,#909090 0,#909090 1px,transparent 1px,transparent 2px)"></div>
<div class="a" style="left:68px;top:368px;width:1px;height:192px;background-image:repeating-linear-gradient(180deg,#909090 0,#909090 1px,transparent 1px,transparent 2px)"></div>
<div class="a" style="left:69px;top:379.5px;width:10px;height:1px;background-image:repeating-linear-gradient(90deg,#909090 0,#909090 1px,transparent 1px,transparent 2px)"></div>
<div class="a" style="left:69px;top:399.5px;width:10px;height:1px;background-image:repeating-linear-gradient(90deg,#909090 0,#909090 1px,transparent 1px,transparent 2px)"></div>
<div class="a" style="left:69px;top:419.5px;width:10px;height:1px;background-image:repeating-linear-gradient(90deg,#909090 0,#909090 1px,transparent 1px,transparent 2px)"></div>
<div class="a" style="left:69px;top:439.5px;width:10px;height:1px;background-image:repeating-linear-gradient(90deg,#909090 0,#909090 1px,transparent 1px,transparent 2px)"></div>
<div class="a" style="left:69px;top:459.5px;width:10px;height:1px;background-image:repeating-linear-gradient(90deg,#909090 0,#909090 1px,transparent 1px,transparent 2px)"></div>
<div class="a" style="left:69px;top:479.5px;width:10px;height:1px;background-image:repeating-linear-gradient(90deg,#909090 0,#909090 1px,transparent 1px,transparent 2px)"></div>
<div class="a" style="left:69px;top:499.5px;width:10px;height:1px;background-image:repeating-linear-gradient(90deg,#909090 0,#909090 1px,transparent 1px,transparent 2px)"></div>
<div class="a" style="left:69px;top:519.5px;width:10px;height:1px;background-image:repeating-linear-gradient(90deg,#909090 0,#909090 1px,transparent 1px,transparent 2px)"></div>
<div class="a" style="left:69px;top:539.5px;width:10px;height:1px;background-image:repeating-linear-gradient(90deg,#909090 0,#909090 1px,transparent 1px,transparent 2px)"></div>
<div class="a" style="left:69px;top:559.5px;width:10px;height:1px;background-image:repeating-linear-gradient(90deg,#909090 0,#909090 1px,transparent 1px,transparent 2px)"></div>
<svg style="left:44px;top:315.5px" width="9" height="9" viewBox="0 0 9 9"><rect x="0.500" y="0.500" width="8" height="8" rx="1.500" fill="#fff" stroke="#909090" stroke-width="1"/><path d="M2.500 4.500 H6.500" stroke="#222" stroke-width="1"/><path d="M4.500 2.500 V6.500" stroke="#222" stroke-width="1"/></svg>
<svg style="left:44px;top:335.5px" width="9" height="9" viewBox="0 0 9 9"><rect x="0.500" y="0.500" width="8" height="8" rx="1.500" fill="#fff" stroke="#909090" stroke-width="1"/><path d="M2.500 4.500 H6.500" stroke="#222" stroke-width="1"/><path d="M4.500 2.500 V6.500" stroke="#222" stroke-width="1"/></svg>
<svg style="left:44px;top:355.5px" width="9" height="9" viewBox="0 0 9 9"><rect x="0.500" y="0.500" width="8" height="8" rx="1.500" fill="#fff" stroke="#909090" stroke-width="1"/><path d="M2.500 4.500 H6.500" stroke="#222" stroke-width="1"/></svg>
<svg style="left:59px;top:292px" width="16" height="16" viewBox="0 0 16 16"><circle cx="8" cy="8" r="7.300" fill="#c0c0c0" stroke="#686868" stroke-width="0.800"/><circle cx="8" cy="8" r="5.800" fill="url(#gclk)" stroke="#8890a0" stroke-width="0.500"/><path d="M8 3.500 V8 H11.500" fill="none" stroke="#111" stroke-width="1.200"/></svg>
<div class="t" style="left:78px;top:293.5px">历史记录模式</div>
<svg style="left:59px;top:311px" width="17" height="17" viewBox="0 0 17 17"><path d="M1 4 L7 1 L13 4 V11 L7 14.500 L1 11Z M1 4 L7 7 L13 4 M7 7 V14.500 M1 11 L7 8 L13 11 M7 1 V8" fill="none" stroke="#20a858" stroke-width="1.200"/><path d="M8 16 C11 15.500 13 14.500 16 12" stroke="#e83010" stroke-width="1.400" fill="none"/><path d="M16.500 11.500 L13 12 L15 14.500Z" fill="#e83010"/></svg>
<div class="t" style="left:78px;top:313.5px">模型视图</div>
<svg style="left:60.500px;top:333.500px" width="13" height="12" viewBox="0 0 13 12"><path d="M0.500 6 L3 4.500 L4.500 7.500 C6 4 8.500 1.500 11.500 0.300 L12 1 C9.500 3.500 7 7 5.500 11.500 L3.500 11.800 C3 9.500 2 7.500 0.500 6Z" fill="#18b828"/></svg>
<svg style="left:75.500px;top:332px" width="15" height="16" viewBox="0 0 15 16"><path d="M1 4 L12 1 V11 L1 14.500Z" fill="#fff" stroke="#e01818" stroke-width="1.200"/><circle cx="6.500" cy="7.500" r="2.800" fill="#4868d8" stroke="#182888" stroke-width="0.800"/><circle cx="6.500" cy="7.500" r="1" fill="#fff"/><rect x="9.500" y="8" width="4.500" height="4" fill="#222"/><path d="M2 3.700 L4 7.500 L2.500 8Z" fill="#e01818"/></svg>
<div class="t" style="left:94px;top:333.5px">摄像机</div>
<svg style="left:58.500px;top:352px" width="17" height="15" viewBox="0 0 17 15"><path d="M1 13.500 V3 H6 L7.500 4.500 H13.500 V7 H4.500Z" fill="#e8b830" stroke="#805800" stroke-width="0.800"/><path d="M1 13.500 L4.500 7 H16.500 L13 13.500Z" fill="#f8c828" stroke="#805800" stroke-width="0.800"/><path d="M2.500 12.500 L5.500 8 H14.500" fill="none" stroke="#fff0a0" stroke-width="0.800"/></svg>
<div class="t" style="left:78px;top:353.5px">模型历史记录</div>
<div class="a" style="left:80px;top:374px;width:12px;height:12px;background:#fff;border:1px solid #111"></div>
<svg style="left:80.500px;top:374px" width="12" height="11" viewBox="0 0 13 12"><path d="M0.500 6 L3 4.500 L4.500 7.500 C6 4 8.500 1.500 11.500 0.300 L12 1 C9.500 3.500 7 7 5.500 11.500 L3.500 11.800 C3 9.500 2 7.500 0.500 6Z" fill="#18b828"/></svg>
<svg style="left:93.500px;top:372px" width="16" height="17" viewBox="0 0 16 17"><path d="M2.500 4 V14 L12 9 Z M2.500 9 L9 13" fill="none" stroke="#222" stroke-width="1.200"/><path d="M2.500 14 L13.500 16" stroke="#e01010" stroke-width="1.100"/><path d="M2.500 4 V1" stroke="#1010e0" stroke-width="1.100"/><path d="M1 2.500 L2.500 0 L4 2.500Z" fill="#1010e0"/><path d="M9 7.500 L14 4.500" stroke="#18a828" stroke-width="1.100"/><path d="M15.500 3.500 L12.500 4 L14 6.500Z" fill="#18a828"/><path d="M15.500 16.300 L12.500 14.500 L12.500 17Z" fill="#e01010"/></svg>
<div class="t" style="left:112.500px;top:373.5px;">基准坐标系（<i>0</i>）</div>
<svg style="left:246px;top:374px" width="13" height="12" viewBox="0 0 13 12"><path d="M0.500 6 L3 4.500 L4.500 7.500 C6 4 8.500 1.500 11.500 0.300 L12 1 C9.500 3.500 7 7 5.500 11.500 L3.500 11.800 C3 9.500 2 7.500 0.500 6Z" fill="#18b828"/></svg>
<div class="a" style="left:80px;top:394px;width:12px;height:12px;background:#fff;border:1px solid #111"></div>
<svg style="left:80.500px;top:394px" width="12" height="11" viewBox="0 0 13 12"><path d="M0.500 6 L3 4.500 L4.500 7.500 C6 4 8.500 1.500 11.500 0.300 L12 1 C9.500 3.500 7 7 5.500 11.500 L3.500 11.800 C3 9.500 2 7.500 0.500 6Z" fill="#18b828"/></svg>
<svg style="left:94px;top:392px" width="16" height="16" viewBox="0 0 16 16"><rect x="1" y="2" width="5" height="5" fill="#fff" stroke="#111" stroke-width="1.200"/><rect x="1" y="10" width="5" height="5" fill="#fff" stroke="#111" stroke-width="1.200"/><rect x="8.500" y="9.500" width="6" height="5.500" fill="#fff" stroke="#111" stroke-width="1.200"/><path d="M8 8 L13 2.500 L15 4.500 L10 9.500Z" fill="#f8a018" stroke="#a05808" stroke-width="0.500"/><path d="M13 2.500 L14 1 L15.800 3 L15 4.500Z" fill="#e01818"/><path d="M8 8 L8.500 10 L10 9.500Z" fill="#3c3c3c"/></svg>
<div class="t" style="left:112.500px;top:393.5px;">草图（<i>1</i>）<i>"SKETCH_...</i></div>
<svg style="left:246px;top:394px" width="13" height="12" viewBox="0 0 13 12"><path d="M0.500 6 L3 4.500 L4.500 7.500 C6 4 8.500 1.500 11.500 0.300 L12 1 C9.500 3.500 7 7 5.500 11.500 L3.500 11.800 C3 9.500 2 7.500 0.500 6Z" fill="#18b828"/></svg>
<div class="a" style="left:80px;top:414px;width:12px;height:12px;background:#fff;border:1px solid #111"></div>
<svg style="left:80.500px;top:414px" width="12" height="11" viewBox="0 0 13 12"><path d="M0.500 6 L3 4.500 L4.500 7.500 C6 4 8.500 1.500 11.500 0.300 L12 1 C9.500 3.500 7 7 5.500 11.500 L3.500 11.800 C3 9.500 2 7.500 0.500 6Z" fill="#18b828"/></svg>
<svg style="left:94px;top:412px" width="16" height="16" viewBox="0 0 16 16"><path d="M1 3 L5 1 L14.500 1.500 V11.500 C11 15 4 15 1 12Z" fill="url(#gex)" stroke="#e06008" stroke-width="0.800"/><path d="M1 12 C4 15.500 11 15.500 14.500 11.500 L14.500 13 C11 16.500 4 16.500 1 13.500Z" fill="#3858d0"/><path d="M5.500 3 V14 M9 3 V14.500" stroke="#e86010" stroke-width="1.100"/></svg>
<div class="t" style="left:112.500px;top:413.5px;">拉伸（<i>2</i>）</div>
<svg style="left:246px;top:414px" width="13" height="12" viewBox="0 0 13 12"><path d="M0.500 6 L3 4.500 L4.500 7.500 C6 4 8.500 1.500 11.500 0.300 L12 1 C9.500 3.500 7 7 5.500 11.500 L3.500 11.800 C3 9.500 2 7.500 0.500 6Z" fill="#18b828"/></svg>
<div class="a" style="left:80px;top:434px;width:12px;height:12px;background:#fff;border:1px solid #111"></div>
<svg style="left:80.500px;top:434px" width="12" height="11" viewBox="0 0 13 12"><path d="M0.500 6 L3 4.500 L4.500 7.500 C6 4 8.500 1.500 11.500 0.300 L12 1 C9.500 3.500 7 7 5.500 11.500 L3.500 11.800 C3 9.500 2 7.500 0.500 6Z" fill="#18b828"/></svg>
<svg style="left:94px;top:432px" width="16" height="16" viewBox="0 0 16 16"><path d="M1 3 L5 1 L14.500 1.500 V11.500 C11 15 4 15 1 12Z" fill="url(#gex)" stroke="#e06008" stroke-width="0.800"/><path d="M1 12 C4 15.500 11 15.500 14.500 11.500 L14.500 13 C11 16.500 4 16.500 1 13.500Z" fill="#3858d0"/><path d="M5.500 3 V14 M9 3 V14.500" stroke="#e86010" stroke-width="1.100"/></svg>
<div class="t" style="left:112.500px;top:433.5px;">拉伸（<i>3</i>）</div>
<svg style="left:246px;top:434px" width="13" height="12" viewBox="0 0 13 12"><path d="M0.500 6 L3 4.500 L4.500 7.500 C6 4 8.500 1.500 11.500 0.300 L12 1 C9.500 3.500 7 7 5.500 11.500 L3.500 11.800 C3 9.500 2 7.500 0.500 6Z" fill="#18b828"/></svg>
<div class="a" style="left:80px;top:454px;width:12px;height:12px;background:#fff;border:1px solid #111"></div>
<svg style="left:80.500px;top:454px" width="12" height="11" viewBox="0 0 13 12"><path d="M0.500 6 L3 4.500 L4.500 7.500 C6 4 8.500 1.500 11.500 0.300 L12 1 C9.500 3.500 7 7 5.500 11.500 L3.500 11.800 C3 9.500 2 7.500 0.500 6Z" fill="#18b828"/></svg>
<svg style="left:94px;top:452px" width="16" height="16" viewBox="0 0 16 16"><path d="M1 3 L5 1 L14.500 1.500 V11.500 C11 15 4 15 1 12Z" fill="url(#gex)" stroke="#e06008" stroke-width="0.800"/><path d="M1 12 C4 15.500 11 15.500 14.500 11.500 L14.500 13 C11 16.500 4 16.500 1 13.500Z" fill="#3858d0"/><path d="M5.500 3 V14 M9 3 V14.500" stroke="#e86010" stroke-width="1.100"/></svg>
<div class="t" style="left:112.500px;top:453.5px;">拉伸（<i>4</i>）</div>
<svg style="left:246px;top:454px" width="13" height="12" viewBox="0 0 13 12"><path d="M0.500 6 L3 4.500 L4.500 7.500 C6 4 8.500 1.500 11.500 0.300 L12 1 C9.500 3.500 7 7 5.500 11.500 L3.500 11.800 C3 9.500 2 7.500 0.500 6Z" fill="#18b828"/></svg>
<div class="a" style="left:80px;top:474px;width:12px;height:12px;background:#fff;border:1px solid #111"></div>
<svg style="left:80.500px;top:474px" width="12" height="11" viewBox="0 0 13 12"><path d="M0.500 6 L3 4.500 L4.500 7.500 C6 4 8.500 1.500 11.500 0.300 L12 1 C9.500 3.500 7 7 5.500 11.500 L3.500 11.800 C3 9.500 2 7.500 0.500 6Z" fill="#18b828"/></svg>
<svg style="left:94px;top:472px" width="16" height="16" viewBox="0 0 16 16"><rect x="1" y="2" width="5" height="5" fill="#fff" stroke="#111" stroke-width="1.200"/><rect x="1" y="10" width="5" height="5" fill="#fff" stroke="#111" stroke-width="1.200"/><rect x="8.500" y="9.500" width="6" height="5.500" fill="#fff" stroke="#111" stroke-width="1.200"/><path d="M8 8 L13 2.500 L15 4.500 L10 9.500Z" fill="#f8a018" stroke="#a05808" stroke-width="0.500"/><path d="M13 2.500 L14 1 L15.800 3 L15 4.500Z" fill="#e01818"/><path d="M8 8 L8.500 10 L10 9.500Z" fill="#3c3c3c"/></svg>
<div class="t" style="left:112.500px;top:473.5px;">草图（<i>5</i>）<i>"SKETCH_...</i></div>
<svg style="left:246px;top:474px" width="13" height="12" viewBox="0 0 13 12"><path d="M0.500 6 L3 4.500 L4.500 7.500 C6 4 8.500 1.500 11.500 0.300 L12 1 C9.500 3.500 7 7 5.500 11.500 L3.500 11.800 C3 9.500 2 7.500 0.500 6Z" fill="#18b828"/></svg>
<div class="a" style="left:80px;top:494px;width:12px;height:12px;background:#fff;border:1px solid #111"></div>
<svg style="left:80.500px;top:494px" width="12" height="11" viewBox="0 0 13 12"><path d="M0.500 6 L3 4.500 L4.500 7.500 C6 4 8.500 1.500 11.500 0.300 L12 1 C9.500 3.500 7 7 5.500 11.500 L3.500 11.800 C3 9.500 2 7.500 0.500 6Z" fill="#18b828"/></svg>
<svg style="left:94px;top:492px" width="16" height="16" viewBox="0 0 16 16"><path d="M1 3 L5 1 L14.500 1.500 V11.500 C11 15 4 15 1 12Z" fill="url(#gex)" stroke="#e06008" stroke-width="0.800"/><path d="M1 12 C4 15.500 11 15.500 14.500 11.500 L14.500 13 C11 16.500 4 16.500 1 13.500Z" fill="#3858d0"/><path d="M5.500 3 V14 M9 3 V14.500" stroke="#e86010" stroke-width="1.100"/></svg>
<div class="t" style="left:112.500px;top:493.5px;">拉伸（<i>6</i>）</div>
<svg style="left:246px;top:494px" width="13" height="12" viewBox="0 0 13 12"><path d="M0.500 6 L3 4.500 L4.500 7.500 C6 4 8.500 1.500 11.500 0.300 L12 1 C9.500 3.500 7 7 5.500 11.500 L3.500 11.800 C3 9.500 2 7.500 0.500 6Z" fill="#18b828"/></svg>
<div class="a" style="left:80px;top:514px;width:12px;height:12px;background:#fff;border:1px solid #111"></div>
<svg style="left:80.500px;top:514px" width="12" height="11" viewBox="0 0 13 12"><path d="M0.500 6 L3 4.500 L4.500 7.500 C6 4 8.500 1.500 11.500 0.300 L12 1 C9.500 3.500 7 7 5.500 11.500 L3.500 11.800 C3 9.500 2 7.500 0.500 6Z" fill="#18b828"/></svg>
<svg style="left:94px;top:512px" width="16" height="16" viewBox="0 0 16 16"><path d="M1 3 L5 1 L14.500 1.500 V11.500 C11 15 4 15 1 12Z" fill="url(#gex)" stroke="#e06008" stroke-width="0.800"/><path d="M1 12 C4 15.500 11 15.500 14.500 11.500 L14.500 13 C11 16.500 4 16.500 1 13.500Z" fill="#3858d0"/><path d="M5.500 3 V14 M9 3 V14.500" stroke="#e86010" stroke-width="1.100"/></svg>
<div class="t" style="left:112.500px;top:513.5px;">拉伸（<i>7</i>）</div>
<svg style="left:246px;top:514px" width="13" height="12" viewBox="0 0 13 12"><path d="M0.500 6 L3 4.500 L4.500 7.500 C6 4 8.500 1.500 11.500 0.300 L12 1 C9.500 3.500 7 7 5.500 11.500 L3.500 11.800 C3 9.500 2 7.500 0.500 6Z" fill="#18b828"/></svg>
<div class="a" style="left:80px;top:534px;width:12px;height:12px;background:#fff;border:1px solid #111"></div>
<svg style="left:80.500px;top:534px" width="12" height="11" viewBox="0 0 13 12"><path d="M0.500 6 L3 4.500 L4.500 7.500 C6 4 8.500 1.500 11.500 0.300 L12 1 C9.500 3.500 7 7 5.500 11.500 L3.500 11.800 C3 9.500 2 7.500 0.500 6Z" fill="#18b828"/></svg>
<svg style="left:94px;top:532px" width="16" height="16" viewBox="0 0 16 16"><path d="M1 3 L5 1 L14.500 1.500 V11.500 C11 15 4 15 1 12Z" fill="url(#gex)" stroke="#e06008" stroke-width="0.800"/><path d="M1 12 C4 15.500 11 15.500 14.500 11.500 L14.500 13 C11 16.500 4 16.500 1 13.500Z" fill="#3858d0"/><path d="M5.500 3 V14 M9 3 V14.500" stroke="#e86010" stroke-width="1.100"/></svg>
<div class="t" style="left:112.500px;top:533.5px;">拉伸（<i>8</i>）</div>
<svg style="left:246px;top:534px" width="13" height="12" viewBox="0 0 13 12"><path d="M0.500 6 L3 4.500 L4.500 7.500 C6 4 8.500 1.500 11.500 0.300 L12 1 C9.500 3.500 7 7 5.500 11.500 L3.500 11.800 C3 9.500 2 7.500 0.500 6Z" fill="#18b828"/></svg>
<div class="a" style="left:80px;top:554px;width:12px;height:12px;background:#fff;border:1px solid #111"></div>
<svg style="left:80.500px;top:554px" width="12" height="11" viewBox="0 0 13 12"><path d="M0.500 6 L3 4.500 L4.500 7.500 C6 4 8.500 1.500 11.500 0.300 L12 1 C9.500 3.500 7 7 5.500 11.500 L3.500 11.800 C3 9.500 2 7.500 0.500 6Z" fill="#18b828"/></svg>
<svg style="left:94px;top:552px" width="16" height="16" viewBox="0 0 16 16"><path d="M1 3 L5 1 L14.500 1.500 V11.500 C11 15 4 15 1 12Z" fill="url(#gex)" stroke="#e06008" stroke-width="0.800"/><path d="M1 12 C4 15.500 11 15.500 14.500 11.500 L14.500 13 C11 16.500 4 16.500 1 13.500Z" fill="#3858d0"/><path d="M5.500 3 V14 M9 3 V14.500" stroke="#e86010" stroke-width="1.100"/></svg>
<div class="t" style="left:112.500px;top:553.5px;font-weight:bold;">拉伸（<i>9</i>）</div>
<svg style="left:246px;top:554px" width="13" height="12" viewBox="0 0 13 12"><path d="M0.500 6 L3 4.500 L4.500 7.500 C6 4 8.500 1.500 11.500 0.300 L12 1 C9.500 3.500 7 7 5.500 11.500 L3.500 11.800 C3 9.500 2 7.500 0.500 6Z" fill="#18b828"/></svg>
<div class="a" style="left:39px;top:669.500px;width:276px;height:16px;background:#efefef"></div>
<div class="a" style="left:57px;top:670px;width:164px;height:15px;background:#c9c9c9"></div>
<svg style="left:45px;top:673px" width="7" height="10" viewBox="0 0 7 10"><path d="M6 1 L1.500 5 L6 9" fill="none" stroke="#505050" stroke-width="1.800"/></svg>
<svg style="left:302.500px;top:673px" width="7" height="10" viewBox="0 0 7 10"><path d="M1 1 L5.500 5 L1 9" fill="none" stroke="#505050" stroke-width="1.800"/></svg>
<div class="a" style="left:38px;top:693px;width:109px;height:2px;background:linear-gradient(#b4b4b4 50%,#fafafa 50%)"></div>
<div class="a" style="left:206px;top:693px;width:109px;height:2px;background:linear-gradient(#b4b4b4 50%,#fafafa 50%)"></div>
<div class="a" style="left:152px;top:691px;width:50px;height:6px;background:#dcdcdc;border:1px solid #a0a0a0;border-top-color:#f4f4f4;border-left-color:#f4f4f4"></div>

<!-- view triad -->
<svg style="left:350px;top:620px" width="60" height="50" viewBox="350 620 60 50">
<defs><radialGradient id="gsph" cx="0.350" cy="0.300" r="0.800"><stop offset="0" stop-color="#ffffff"/><stop offset="0.600" stop-color="#c8c8c8"/><stop offset="1" stop-color="#8c8c8c"/></radialGradient></defs>
<path d="M365.400 642.600 L384 636 L387.900 652.100 L370.600 656.500Z" fill="#d2d3d4" stroke="#a8a8a8" stroke-width="0.700"/>
<path d="M369.500 645 L382.500 641 L385.500 652 L373 655Z" fill="#d8d9da" stroke="#b0b0b0" stroke-width="0.600"/>
<path d="M365.400 642.600 L369.500 645 M384 636 L382.500 641 M387.900 652.100 L385.500 652" stroke="#b0b0b0" stroke-width="0.600"/>
<path d="M372 653.500 L374.800 649.500 M374.800 649.500 L372.500 646.500 M374.800 649.500 L378 646.300" stroke="#90c898" stroke-width="0.900" fill="none"/>
<path d="M368.300 659 L363 637" stroke="#1030f0" stroke-width="1.800"/>
<path d="M362 633.500 L361.300 640 L365 639Z" fill="#1030f0"/>
<path d="M370 659.500 L390 656" stroke="#d02828" stroke-width="1.700"/>
<path d="M396 655 L388.500 654.500 L389.300 657.700Z" fill="#d02828"/>
<circle cx="368.300" cy="660.300" r="4.200" fill="url(#gsph)"/>
<text x="357.300" y="633" font-family="Liberation Sans, sans-serif" font-size="12" fill="#2848ff">Z</text>
<text x="396.800" y="659.800" font-family="Liberation Sans, sans-serif" font-size="12" fill="#c83030">X</text>
</svg>
<!-- status bar details -->
<div class="a" style="left:625px;top:707px;width:1px;height:19px;background:#f8f8f8"></div>
<div class="a" style="left:1251px;top:707px;width:2px;height:19px;background:linear-gradient(90deg,#b8b8b8 50%,#f8f8f8 50%)"></div>
<div class="a" style="left:1271px;top:707px;width:2px;height:19px;background:linear-gradient(90deg,#b8b8b8 50%,#f8f8f8 50%)"></div>
<div class="a" style="left:1347px;top:707px;width:2px;height:19px;background:linear-gradient(90deg,#b8b8b8 50%,#f8f8f8 50%)"></div>
<div class="a" style="left:1275px;top:709px;width:16px;height:16px;background:#8c9eac;border:1px solid #7c8c98"></div>
<svg style="left:1277px;top:710px" width="13" height="14" viewBox="0 0 21 22"><path d="M2 3 L7 20.500" stroke="#6c6c6c" stroke-width="1.500"/><path d="M2.500 3.500 C7 0.500 12 6 19.500 2.500 L21 13 C14 17 9 11 5.500 14.500Z" fill="#b4b4b4" stroke="#787878" stroke-width="0.600"/><path d="M5 4 L8 4.500 L8.800 8 L5.800 7.500Z M11.500 5.500 L15 6 L15.500 9.500 L12 9Z M8.800 8 L12 9 L12.800 12.500 L9.500 11.500Z M15.500 9.500 L19 8.500 L19.500 12 L16 13Z" fill="#8a8a8a"/></svg>
<svg style="left:1295px;top:709px" width="16" height="16" viewBox="0 0 16 16"><path d="M0.500 3.500 V0.500 H3.500 M12.500 0.500 H15.500 V3.500 M15.500 12.500 V15.500 H12.500 M3.500 15.500 H0.500 V12.500" fill="none" stroke="#fff" stroke-width="1.200"/><rect x="3" y="3" width="10" height="10" fill="#fff" stroke="#222" stroke-width="1.500"/><rect x="4.800" y="5.500" width="6.400" height="5" fill="#2878e8"/></svg>
<!-- bottom strip -->
<div class="a" style="left:307px;top:729px;width:158px;height:2px;background:#5a5a5a;border-top:1px solid #7c7c7c"></div>
<div class="a" style="left:468px;top:729px;width:158px;height:2px;background:#5a5a5a;border-top:1px solid #7c7c7c"></div>
<div class="a" style="left:1273px;top:729px;width:50px;height:2px;background:#343434"></div>

</body></html>
